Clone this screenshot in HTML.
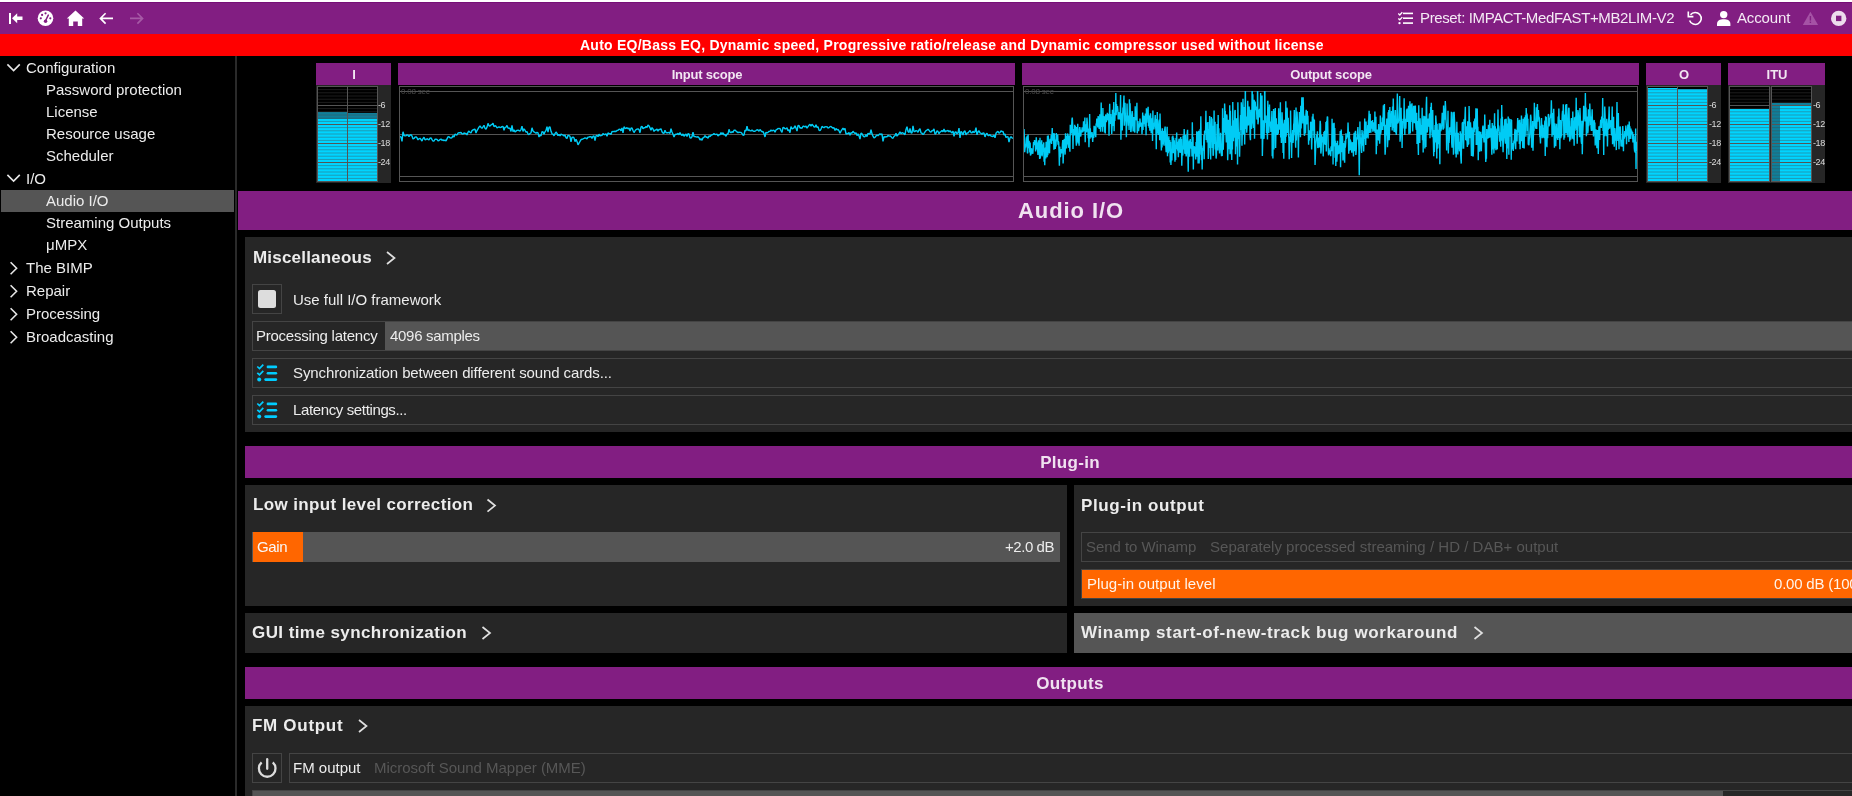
<!DOCTYPE html>
<html><head><meta charset="utf-8">
<style>
*{box-sizing:border-box;margin:0;padding:0}
html,body{width:1852px;height:796px;overflow:hidden;background:#000;font-family:"Liberation Sans",sans-serif;color:#eee;position:relative}
.a{position:absolute}
.t{position:absolute;white-space:nowrap;line-height:1;will-change:transform}
svg{position:absolute;overflow:visible}
</style></head><body>

<div class="a" style="left:0px;top:0px;width:1852px;height:2px;background:#fff;"></div>
<div class="a" style="left:0px;top:2px;width:1852px;height:32px;background:#821e82;"></div>
<div class="a" style="left:0px;top:2px;width:1852px;height:1px;background:#770e77;"></div>
<svg style="left:0;top:0" width="160" height="34" viewBox="0 0 160 34">
<rect x="9" y="13" width="2" height="11" fill="#ffffff"/>
<path d="M12 18.3 L17.2 13.3 L17.2 16.6 L22.5 16.6 L22.5 20 L17.2 20 L17.2 23.2 Z" fill="#ffffff"/>
<circle cx="45.5" cy="18.3" r="7.8" fill="#ffffff"/>
<circle cx="40.8" cy="18.3" r="1.1" fill="#821e82"/><circle cx="42.1" cy="14.9" r="1.1" fill="#821e82"/><circle cx="45.55" cy="13.3" r="1.1" fill="#821e82"/><circle cx="50.3" cy="18.3" r="1.1" fill="#821e82"/>
<circle cx="45.55" cy="21.2" r="1.75" fill="#821e82"/>
<path d="M45.4 21 L48.3 15.1" stroke="#821e82" stroke-width="1.5" stroke-linecap="round"/>
<path d="M75.5 10.5 L84.2 18.6 L82.2 18.6 L82.2 26 L77.8 26 L77.8 21.5 L73.2 21.5 L73.2 26 L68.8 26 L68.8 18.6 L66.8 18.6 Z" fill="#ffffff"/>
<path d="M113 18.4 L100.5 18.4 M105.6 13.2 L100.4 18.4 L105.6 23.6" stroke="#ffffff" stroke-width="1.6" fill="none"/>
<path d="M130 18.4 L142.5 18.4 M137.4 13.2 L142.6 18.4 L137.4 23.6" stroke="#a65aa6" stroke-width="1.6" fill="none"/>
</svg>
<svg style="left:1390px;top:0" width="462" height="34" viewBox="1390 0 462 34">
<path d="M1398.3 13.6 L1399.8 15 L1402.3 12.3 M1398.3 18.4 L1399.8 19.8 L1402.3 17.1" stroke="#ffffff" stroke-width="1.3" fill="none"/>
<circle cx="1399.5" cy="23.1" r="1.2" fill="#ffffff"/>
<rect x="1403" y="12.6" width="10" height="1.6" fill="#ffffff"/>
<rect x="1403" y="17.4" width="10" height="1.6" fill="#ffffff"/>
<rect x="1403" y="22.3" width="10" height="1.6" fill="#ffffff"/>
<path d="M1690.5 14.8 A6 6 0 1 1 1689.6 20.5" stroke="#ffffff" stroke-width="1.6" fill="none"/>
<path d="M1688.3 11.5 L1688.3 16.6 L1693.4 16.6" stroke="#ffffff" stroke-width="1.6" fill="none"/>
<circle cx="1723.7" cy="14.6" r="3.7" fill="#ffffff"/>
<path d="M1717 26 L1717 24.2 C1717 20.4 1720 19.3 1723.7 19.3 C1727.4 19.3 1730.4 20.4 1730.4 24.2 L1730.4 26 Z" fill="#ffffff"/>
<path d="M1810.4 11.8 L1818.1 25 L1802.8 25 Z" fill="#a552a5"/>
<rect x="1809.7" y="16" width="1.4" height="4.6" fill="#821e82"/><rect x="1809.7" y="21.6" width="1.4" height="1.4" fill="#821e82"/>
<circle cx="1838.7" cy="18.4" r="7.7" fill="#ecdcec"/>
<rect x="1836" y="15.7" width="5.4" height="5.4" fill="#821e82"/>
</svg>
<div class="t" style="left:1420px;top:10.30px;font-size:15px;font-weight:400;color:#f4eaf4;letter-spacing:-0.37px;">Preset: IMPACT-MedFAST+MB2LIM-V2</div>
<div class="t" style="left:1736.5px;top:10.30px;font-size:15px;font-weight:400;color:#f4eaf4;letter-spacing:-0.15px;">Account</div>
<div class="a" style="left:0px;top:34px;width:1852px;height:22px;background:#ff0000;"></div>
<div class="t" style="left:580px;top:38.15px;font-size:14px;font-weight:700;color:#ffffff;letter-spacing:0.245px;">Auto EQ/Bass EQ, Dynamic speed, Progressive ratio/release and Dynamic compressor used without license</div>
<div class="a" style="left:235px;top:56px;width:2px;height:740px;background:#2a2a2a;"></div>
<div class="a" style="left:1px;top:190px;width:233px;height:22px;background:#555555;"></div>
<div class="t" style="left:26.4px;top:60.30px;font-size:15px;font-weight:400;color:#ececec;letter-spacing:0px;">Configuration</div>
<div class="t" style="left:45.7px;top:82.30px;font-size:15px;font-weight:400;color:#ececec;letter-spacing:0px;">Password protection</div>
<div class="t" style="left:45.7px;top:104.30px;font-size:15px;font-weight:400;color:#ececec;letter-spacing:0px;">License</div>
<div class="t" style="left:45.7px;top:126.30px;font-size:15px;font-weight:400;color:#ececec;letter-spacing:0px;">Resource usage</div>
<div class="t" style="left:45.7px;top:148.30px;font-size:15px;font-weight:400;color:#ececec;letter-spacing:0px;">Scheduler</div>
<div class="t" style="left:26.4px;top:170.80px;font-size:15px;font-weight:400;color:#ececec;letter-spacing:0px;">I/O</div>
<div class="t" style="left:45.7px;top:192.80px;font-size:15px;font-weight:400;color:#ececec;letter-spacing:0px;">Audio I/O</div>
<div class="t" style="left:45.7px;top:214.80px;font-size:15px;font-weight:400;color:#ececec;letter-spacing:0px;">Streaming Outputs</div>
<div class="t" style="left:45.7px;top:236.80px;font-size:15px;font-weight:400;color:#ececec;letter-spacing:0px;">&mu;MPX</div>
<div class="t" style="left:26.4px;top:260.30px;font-size:15px;font-weight:400;color:#ececec;letter-spacing:0px;">The BIMP</div>
<div class="t" style="left:26.4px;top:283.30px;font-size:15px;font-weight:400;color:#ececec;letter-spacing:0px;">Repair</div>
<div class="t" style="left:26.4px;top:306.30px;font-size:15px;font-weight:400;color:#ececec;letter-spacing:0px;">Processing</div>
<div class="t" style="left:26.4px;top:329.30px;font-size:15px;font-weight:400;color:#ececec;letter-spacing:0px;">Broadcasting</div>
<svg style="left:0;top:0" width="30" height="360"><path d="M7.4 64.4 L13.6 70.6 L19.8 64.4" stroke="#e6e6e6" stroke-width="1.6" fill="none"/><path d="M7.4 174.9 L13.6 181.1 L19.8 174.9" stroke="#e6e6e6" stroke-width="1.6" fill="none"/><path d="M10.6 262.2 L16.6 268.2 L10.6 274.2" stroke="#e6e6e6" stroke-width="1.6" fill="none"/><path d="M10.6 285.2 L16.6 291.2 L10.6 297.2" stroke="#e6e6e6" stroke-width="1.6" fill="none"/><path d="M10.6 308.2 L16.6 314.2 L10.6 320.2" stroke="#e6e6e6" stroke-width="1.6" fill="none"/><path d="M10.6 331.2 L16.6 337.2 L10.6 343.2" stroke="#e6e6e6" stroke-width="1.6" fill="none"/></svg>
<div class="a" style="left:316px;top:63px;width:75px;height:22px;background:#821e82"></div>
<div class="t" style="left:-146.5px;width:1000px;text-align:center;top:68.00px;font-size:13px;font-weight:700;color:#f2e6f2;letter-spacing:0px">I</div>
<div class="a" style="left:316px;top:85px;width:75px;height:98px;background:#262626;"></div>
<div class="a" style="left:317px;top:86px;width:31px;height:96px;border:1px solid #555;background:#000"></div>
<div class="a" style="left:318px;top:112.2px;width:29px;height:6.5px;background:#0f7f9a;"></div>
<div class="a" style="left:318px;top:118.7px;width:29px;height:62.3px;background:#00d4ff;"></div>
<svg style="left:0;top:0" width="1" height="1"><rect x="318" y="89.27" width="29" height="0.8" fill="rgba(70,70,70,0.5)"/><rect x="318" y="92.43" width="29" height="0.8" fill="rgba(70,70,70,0.5)"/><rect x="318" y="95.60" width="29" height="0.8" fill="rgba(70,70,70,0.5)"/><rect x="318" y="98.77" width="29" height="0.8" fill="rgba(70,70,70,0.5)"/><rect x="318" y="101.93" width="29" height="0.8" fill="rgba(70,70,70,0.5)"/><rect x="318" y="108.27" width="29" height="0.8" fill="rgba(70,70,70,0.5)"/><rect x="318" y="111.43" width="29" height="0.8" fill="rgba(70,70,70,0.5)"/><rect x="318" y="114.60" width="29" height="0.8" fill="rgba(70,70,70,0.5)"/><rect x="318" y="117.77" width="29" height="0.8" fill="rgba(70,70,70,0.5)"/><rect x="318" y="120.93" width="29" height="0.8" fill="rgba(70,70,70,0.5)"/><rect x="318" y="127.27" width="29" height="0.8" fill="rgba(70,70,70,0.5)"/><rect x="318" y="130.43" width="29" height="0.8" fill="rgba(70,70,70,0.5)"/><rect x="318" y="133.60" width="29" height="0.8" fill="rgba(70,70,70,0.5)"/><rect x="318" y="136.77" width="29" height="0.8" fill="rgba(70,70,70,0.5)"/><rect x="318" y="139.93" width="29" height="0.8" fill="rgba(70,70,70,0.5)"/><rect x="318" y="146.27" width="29" height="0.8" fill="rgba(70,70,70,0.5)"/><rect x="318" y="149.43" width="29" height="0.8" fill="rgba(70,70,70,0.5)"/><rect x="318" y="152.60" width="29" height="0.8" fill="rgba(70,70,70,0.5)"/><rect x="318" y="155.77" width="29" height="0.8" fill="rgba(70,70,70,0.5)"/><rect x="318" y="158.93" width="29" height="0.8" fill="rgba(70,70,70,0.5)"/><rect x="318" y="165.27" width="29" height="0.8" fill="rgba(70,70,70,0.5)"/><rect x="318" y="168.43" width="29" height="0.8" fill="rgba(70,70,70,0.5)"/><rect x="318" y="171.60" width="29" height="0.8" fill="rgba(70,70,70,0.5)"/><rect x="318" y="174.77" width="29" height="0.8" fill="rgba(70,70,70,0.5)"/><rect x="318" y="177.93" width="29" height="0.8" fill="rgba(70,70,70,0.5)"/></svg>
<div class="a" style="left:318px;top:105px;width:29px;height:1px;background:#555;"></div>
<div class="a" style="left:318px;top:124px;width:29px;height:1px;background:#555;"></div>
<div class="a" style="left:318px;top:143px;width:29px;height:1px;background:#555;"></div>
<div class="a" style="left:318px;top:162px;width:29px;height:1px;background:#555;"></div>
<div class="a" style="left:347px;top:86px;width:31px;height:96px;border:1px solid #555;background:#000"></div>
<div class="a" style="left:348px;top:112.5px;width:29px;height:6.200000000000003px;background:#0f7f9a;"></div>
<div class="a" style="left:348px;top:118.7px;width:29px;height:62.3px;background:#00d4ff;"></div>
<svg style="left:0;top:0" width="1" height="1"><rect x="348" y="89.27" width="29" height="0.8" fill="rgba(70,70,70,0.5)"/><rect x="348" y="92.43" width="29" height="0.8" fill="rgba(70,70,70,0.5)"/><rect x="348" y="95.60" width="29" height="0.8" fill="rgba(70,70,70,0.5)"/><rect x="348" y="98.77" width="29" height="0.8" fill="rgba(70,70,70,0.5)"/><rect x="348" y="101.93" width="29" height="0.8" fill="rgba(70,70,70,0.5)"/><rect x="348" y="108.27" width="29" height="0.8" fill="rgba(70,70,70,0.5)"/><rect x="348" y="111.43" width="29" height="0.8" fill="rgba(70,70,70,0.5)"/><rect x="348" y="114.60" width="29" height="0.8" fill="rgba(70,70,70,0.5)"/><rect x="348" y="117.77" width="29" height="0.8" fill="rgba(70,70,70,0.5)"/><rect x="348" y="120.93" width="29" height="0.8" fill="rgba(70,70,70,0.5)"/><rect x="348" y="127.27" width="29" height="0.8" fill="rgba(70,70,70,0.5)"/><rect x="348" y="130.43" width="29" height="0.8" fill="rgba(70,70,70,0.5)"/><rect x="348" y="133.60" width="29" height="0.8" fill="rgba(70,70,70,0.5)"/><rect x="348" y="136.77" width="29" height="0.8" fill="rgba(70,70,70,0.5)"/><rect x="348" y="139.93" width="29" height="0.8" fill="rgba(70,70,70,0.5)"/><rect x="348" y="146.27" width="29" height="0.8" fill="rgba(70,70,70,0.5)"/><rect x="348" y="149.43" width="29" height="0.8" fill="rgba(70,70,70,0.5)"/><rect x="348" y="152.60" width="29" height="0.8" fill="rgba(70,70,70,0.5)"/><rect x="348" y="155.77" width="29" height="0.8" fill="rgba(70,70,70,0.5)"/><rect x="348" y="158.93" width="29" height="0.8" fill="rgba(70,70,70,0.5)"/><rect x="348" y="165.27" width="29" height="0.8" fill="rgba(70,70,70,0.5)"/><rect x="348" y="168.43" width="29" height="0.8" fill="rgba(70,70,70,0.5)"/><rect x="348" y="171.60" width="29" height="0.8" fill="rgba(70,70,70,0.5)"/><rect x="348" y="174.77" width="29" height="0.8" fill="rgba(70,70,70,0.5)"/><rect x="348" y="177.93" width="29" height="0.8" fill="rgba(70,70,70,0.5)"/></svg>
<div class="a" style="left:348px;top:105px;width:29px;height:1px;background:#555;"></div>
<div class="a" style="left:348px;top:124px;width:29px;height:1px;background:#555;"></div>
<div class="a" style="left:348px;top:143px;width:29px;height:1px;background:#555;"></div>
<div class="a" style="left:348px;top:162px;width:29px;height:1px;background:#555;"></div>
<div class="t" style="left:378px;top:101.48px;font-size:9px;font-weight:400;color:#dddddd;letter-spacing:-0.4px;">-6</div>
<div class="t" style="left:378px;top:120.48px;font-size:9px;font-weight:400;color:#dddddd;letter-spacing:-0.4px;">-12</div>
<div class="t" style="left:378px;top:139.48px;font-size:9px;font-weight:400;color:#dddddd;letter-spacing:-0.4px;">-18</div>
<div class="t" style="left:378px;top:158.48px;font-size:9px;font-weight:400;color:#dddddd;letter-spacing:-0.4px;">-24</div>
<div class="a" style="left:1646px;top:63px;width:75px;height:22px;background:#821e82"></div>
<div class="t" style="left:1183.5px;width:1000px;text-align:center;top:68.00px;font-size:13px;font-weight:700;color:#f2e6f2;letter-spacing:0px">O</div>
<div class="a" style="left:1646px;top:85px;width:75px;height:98px;background:#262626;"></div>
<div class="a" style="left:1647px;top:86px;width:31px;height:96px;border:1px solid #555;background:#000"></div>
<div class="a" style="left:1648px;top:87.6px;width:29px;height:93.4px;background:#00d4ff;"></div>
<svg style="left:0;top:0" width="1" height="1"><rect x="1648" y="89.27" width="29" height="0.8" fill="rgba(70,70,70,0.5)"/><rect x="1648" y="92.43" width="29" height="0.8" fill="rgba(70,70,70,0.5)"/><rect x="1648" y="95.60" width="29" height="0.8" fill="rgba(70,70,70,0.5)"/><rect x="1648" y="98.77" width="29" height="0.8" fill="rgba(70,70,70,0.5)"/><rect x="1648" y="101.93" width="29" height="0.8" fill="rgba(70,70,70,0.5)"/><rect x="1648" y="108.27" width="29" height="0.8" fill="rgba(70,70,70,0.5)"/><rect x="1648" y="111.43" width="29" height="0.8" fill="rgba(70,70,70,0.5)"/><rect x="1648" y="114.60" width="29" height="0.8" fill="rgba(70,70,70,0.5)"/><rect x="1648" y="117.77" width="29" height="0.8" fill="rgba(70,70,70,0.5)"/><rect x="1648" y="120.93" width="29" height="0.8" fill="rgba(70,70,70,0.5)"/><rect x="1648" y="127.27" width="29" height="0.8" fill="rgba(70,70,70,0.5)"/><rect x="1648" y="130.43" width="29" height="0.8" fill="rgba(70,70,70,0.5)"/><rect x="1648" y="133.60" width="29" height="0.8" fill="rgba(70,70,70,0.5)"/><rect x="1648" y="136.77" width="29" height="0.8" fill="rgba(70,70,70,0.5)"/><rect x="1648" y="139.93" width="29" height="0.8" fill="rgba(70,70,70,0.5)"/><rect x="1648" y="146.27" width="29" height="0.8" fill="rgba(70,70,70,0.5)"/><rect x="1648" y="149.43" width="29" height="0.8" fill="rgba(70,70,70,0.5)"/><rect x="1648" y="152.60" width="29" height="0.8" fill="rgba(70,70,70,0.5)"/><rect x="1648" y="155.77" width="29" height="0.8" fill="rgba(70,70,70,0.5)"/><rect x="1648" y="158.93" width="29" height="0.8" fill="rgba(70,70,70,0.5)"/><rect x="1648" y="165.27" width="29" height="0.8" fill="rgba(70,70,70,0.5)"/><rect x="1648" y="168.43" width="29" height="0.8" fill="rgba(70,70,70,0.5)"/><rect x="1648" y="171.60" width="29" height="0.8" fill="rgba(70,70,70,0.5)"/><rect x="1648" y="174.77" width="29" height="0.8" fill="rgba(70,70,70,0.5)"/><rect x="1648" y="177.93" width="29" height="0.8" fill="rgba(70,70,70,0.5)"/></svg>
<div class="a" style="left:1648px;top:105px;width:29px;height:1px;background:#555;"></div>
<div class="a" style="left:1648px;top:124px;width:29px;height:1px;background:#555;"></div>
<div class="a" style="left:1648px;top:143px;width:29px;height:1px;background:#555;"></div>
<div class="a" style="left:1648px;top:162px;width:29px;height:1px;background:#555;"></div>
<div class="a" style="left:1677px;top:86px;width:31px;height:96px;border:1px solid #555;background:#000"></div>
<div class="a" style="left:1678px;top:88.8px;width:29px;height:92.2px;background:#00d4ff;"></div>
<svg style="left:0;top:0" width="1" height="1"><rect x="1678" y="89.27" width="29" height="0.8" fill="rgba(70,70,70,0.5)"/><rect x="1678" y="92.43" width="29" height="0.8" fill="rgba(70,70,70,0.5)"/><rect x="1678" y="95.60" width="29" height="0.8" fill="rgba(70,70,70,0.5)"/><rect x="1678" y="98.77" width="29" height="0.8" fill="rgba(70,70,70,0.5)"/><rect x="1678" y="101.93" width="29" height="0.8" fill="rgba(70,70,70,0.5)"/><rect x="1678" y="108.27" width="29" height="0.8" fill="rgba(70,70,70,0.5)"/><rect x="1678" y="111.43" width="29" height="0.8" fill="rgba(70,70,70,0.5)"/><rect x="1678" y="114.60" width="29" height="0.8" fill="rgba(70,70,70,0.5)"/><rect x="1678" y="117.77" width="29" height="0.8" fill="rgba(70,70,70,0.5)"/><rect x="1678" y="120.93" width="29" height="0.8" fill="rgba(70,70,70,0.5)"/><rect x="1678" y="127.27" width="29" height="0.8" fill="rgba(70,70,70,0.5)"/><rect x="1678" y="130.43" width="29" height="0.8" fill="rgba(70,70,70,0.5)"/><rect x="1678" y="133.60" width="29" height="0.8" fill="rgba(70,70,70,0.5)"/><rect x="1678" y="136.77" width="29" height="0.8" fill="rgba(70,70,70,0.5)"/><rect x="1678" y="139.93" width="29" height="0.8" fill="rgba(70,70,70,0.5)"/><rect x="1678" y="146.27" width="29" height="0.8" fill="rgba(70,70,70,0.5)"/><rect x="1678" y="149.43" width="29" height="0.8" fill="rgba(70,70,70,0.5)"/><rect x="1678" y="152.60" width="29" height="0.8" fill="rgba(70,70,70,0.5)"/><rect x="1678" y="155.77" width="29" height="0.8" fill="rgba(70,70,70,0.5)"/><rect x="1678" y="158.93" width="29" height="0.8" fill="rgba(70,70,70,0.5)"/><rect x="1678" y="165.27" width="29" height="0.8" fill="rgba(70,70,70,0.5)"/><rect x="1678" y="168.43" width="29" height="0.8" fill="rgba(70,70,70,0.5)"/><rect x="1678" y="171.60" width="29" height="0.8" fill="rgba(70,70,70,0.5)"/><rect x="1678" y="174.77" width="29" height="0.8" fill="rgba(70,70,70,0.5)"/><rect x="1678" y="177.93" width="29" height="0.8" fill="rgba(70,70,70,0.5)"/></svg>
<div class="a" style="left:1678px;top:105px;width:29px;height:1px;background:#555;"></div>
<div class="a" style="left:1678px;top:124px;width:29px;height:1px;background:#555;"></div>
<div class="a" style="left:1678px;top:143px;width:29px;height:1px;background:#555;"></div>
<div class="a" style="left:1678px;top:162px;width:29px;height:1px;background:#555;"></div>
<div class="t" style="left:1708.5px;top:101.48px;font-size:9px;font-weight:400;color:#dddddd;letter-spacing:-0.4px;">-6</div>
<div class="t" style="left:1708.5px;top:120.48px;font-size:9px;font-weight:400;color:#dddddd;letter-spacing:-0.4px;">-12</div>
<div class="t" style="left:1708.5px;top:139.48px;font-size:9px;font-weight:400;color:#dddddd;letter-spacing:-0.4px;">-18</div>
<div class="t" style="left:1708.5px;top:158.48px;font-size:9px;font-weight:400;color:#dddddd;letter-spacing:-0.4px;">-24</div>
<div class="a" style="left:1728px;top:63px;width:97px;height:22px;background:#821e82"></div>
<div class="t" style="left:1276.5px;width:1000px;text-align:center;top:68.00px;font-size:13px;font-weight:700;color:#f2e6f2;letter-spacing:0px">ITU</div>
<div class="a" style="left:1728px;top:85px;width:97px;height:98px;background:#262626;"></div>
<div class="a" style="left:1729px;top:86px;width:41px;height:96px;border:1px solid #555;background:#000"></div>
<div class="a" style="left:1730px;top:108.7px;width:39px;height:72.3px;background:#00d4ff;"></div>
<svg style="left:0;top:0" width="1" height="1"><rect x="1730" y="89.27" width="39" height="0.8" fill="rgba(70,70,70,0.5)"/><rect x="1730" y="92.43" width="39" height="0.8" fill="rgba(70,70,70,0.5)"/><rect x="1730" y="95.60" width="39" height="0.8" fill="rgba(70,70,70,0.5)"/><rect x="1730" y="98.77" width="39" height="0.8" fill="rgba(70,70,70,0.5)"/><rect x="1730" y="101.93" width="39" height="0.8" fill="rgba(70,70,70,0.5)"/><rect x="1730" y="108.27" width="39" height="0.8" fill="rgba(70,70,70,0.5)"/><rect x="1730" y="111.43" width="39" height="0.8" fill="rgba(70,70,70,0.5)"/><rect x="1730" y="114.60" width="39" height="0.8" fill="rgba(70,70,70,0.5)"/><rect x="1730" y="117.77" width="39" height="0.8" fill="rgba(70,70,70,0.5)"/><rect x="1730" y="120.93" width="39" height="0.8" fill="rgba(70,70,70,0.5)"/><rect x="1730" y="127.27" width="39" height="0.8" fill="rgba(70,70,70,0.5)"/><rect x="1730" y="130.43" width="39" height="0.8" fill="rgba(70,70,70,0.5)"/><rect x="1730" y="133.60" width="39" height="0.8" fill="rgba(70,70,70,0.5)"/><rect x="1730" y="136.77" width="39" height="0.8" fill="rgba(70,70,70,0.5)"/><rect x="1730" y="139.93" width="39" height="0.8" fill="rgba(70,70,70,0.5)"/><rect x="1730" y="146.27" width="39" height="0.8" fill="rgba(70,70,70,0.5)"/><rect x="1730" y="149.43" width="39" height="0.8" fill="rgba(70,70,70,0.5)"/><rect x="1730" y="152.60" width="39" height="0.8" fill="rgba(70,70,70,0.5)"/><rect x="1730" y="155.77" width="39" height="0.8" fill="rgba(70,70,70,0.5)"/><rect x="1730" y="158.93" width="39" height="0.8" fill="rgba(70,70,70,0.5)"/><rect x="1730" y="165.27" width="39" height="0.8" fill="rgba(70,70,70,0.5)"/><rect x="1730" y="168.43" width="39" height="0.8" fill="rgba(70,70,70,0.5)"/><rect x="1730" y="171.60" width="39" height="0.8" fill="rgba(70,70,70,0.5)"/><rect x="1730" y="174.77" width="39" height="0.8" fill="rgba(70,70,70,0.5)"/><rect x="1730" y="177.93" width="39" height="0.8" fill="rgba(70,70,70,0.5)"/></svg>
<div class="a" style="left:1730px;top:105px;width:39px;height:1px;background:#555;"></div>
<div class="a" style="left:1730px;top:124px;width:39px;height:1px;background:#555;"></div>
<div class="a" style="left:1730px;top:143px;width:39px;height:1px;background:#555;"></div>
<div class="a" style="left:1730px;top:162px;width:39px;height:1px;background:#555;"></div>
<div class="a" style="left:1771px;top:86px;width:41px;height:96px;border:1px solid #555;background:#000"></div>
<div class="a" style="left:1772px;top:103px;width:39px;height:2.700000000000003px;background:#0f7f9a;"></div>
<div class="a" style="left:1772px;top:105.7px;width:39px;height:75.3px;background:#00d4ff;"></div>
<div class="a" style="left:1772px;top:105.7px;width:8px;height:75.3px;background:#0f7f9a;"></div>
<svg style="left:0;top:0" width="1" height="1"><rect x="1772" y="89.27" width="39" height="0.8" fill="rgba(70,70,70,0.5)"/><rect x="1772" y="92.43" width="39" height="0.8" fill="rgba(70,70,70,0.5)"/><rect x="1772" y="95.60" width="39" height="0.8" fill="rgba(70,70,70,0.5)"/><rect x="1772" y="98.77" width="39" height="0.8" fill="rgba(70,70,70,0.5)"/><rect x="1772" y="101.93" width="39" height="0.8" fill="rgba(70,70,70,0.5)"/><rect x="1772" y="108.27" width="39" height="0.8" fill="rgba(70,70,70,0.5)"/><rect x="1772" y="111.43" width="39" height="0.8" fill="rgba(70,70,70,0.5)"/><rect x="1772" y="114.60" width="39" height="0.8" fill="rgba(70,70,70,0.5)"/><rect x="1772" y="117.77" width="39" height="0.8" fill="rgba(70,70,70,0.5)"/><rect x="1772" y="120.93" width="39" height="0.8" fill="rgba(70,70,70,0.5)"/><rect x="1772" y="127.27" width="39" height="0.8" fill="rgba(70,70,70,0.5)"/><rect x="1772" y="130.43" width="39" height="0.8" fill="rgba(70,70,70,0.5)"/><rect x="1772" y="133.60" width="39" height="0.8" fill="rgba(70,70,70,0.5)"/><rect x="1772" y="136.77" width="39" height="0.8" fill="rgba(70,70,70,0.5)"/><rect x="1772" y="139.93" width="39" height="0.8" fill="rgba(70,70,70,0.5)"/><rect x="1772" y="146.27" width="39" height="0.8" fill="rgba(70,70,70,0.5)"/><rect x="1772" y="149.43" width="39" height="0.8" fill="rgba(70,70,70,0.5)"/><rect x="1772" y="152.60" width="39" height="0.8" fill="rgba(70,70,70,0.5)"/><rect x="1772" y="155.77" width="39" height="0.8" fill="rgba(70,70,70,0.5)"/><rect x="1772" y="158.93" width="39" height="0.8" fill="rgba(70,70,70,0.5)"/><rect x="1772" y="165.27" width="39" height="0.8" fill="rgba(70,70,70,0.5)"/><rect x="1772" y="168.43" width="39" height="0.8" fill="rgba(70,70,70,0.5)"/><rect x="1772" y="171.60" width="39" height="0.8" fill="rgba(70,70,70,0.5)"/><rect x="1772" y="174.77" width="39" height="0.8" fill="rgba(70,70,70,0.5)"/><rect x="1772" y="177.93" width="39" height="0.8" fill="rgba(70,70,70,0.5)"/></svg>
<div class="a" style="left:1772px;top:105px;width:39px;height:1px;background:#555;"></div>
<div class="a" style="left:1772px;top:124px;width:39px;height:1px;background:#555;"></div>
<div class="a" style="left:1772px;top:143px;width:39px;height:1px;background:#555;"></div>
<div class="a" style="left:1772px;top:162px;width:39px;height:1px;background:#555;"></div>
<div class="t" style="left:1812.5px;top:101.48px;font-size:9px;font-weight:400;color:#dddddd;letter-spacing:-0.4px;">-6</div>
<div class="t" style="left:1812.5px;top:120.48px;font-size:9px;font-weight:400;color:#dddddd;letter-spacing:-0.4px;">-12</div>
<div class="t" style="left:1812.5px;top:139.48px;font-size:9px;font-weight:400;color:#dddddd;letter-spacing:-0.4px;">-18</div>
<div class="t" style="left:1812.5px;top:158.48px;font-size:9px;font-weight:400;color:#dddddd;letter-spacing:-0.4px;">-24</div>
<div class="a" style="left:398px;top:63px;width:617px;height:22px;background:#821e82"></div>
<div class="t" style="left:206.5px;width:1000px;text-align:center;top:68.00px;font-size:13px;font-weight:700;color:#f2e6f2;letter-spacing:-0.2px">Input scope</div>
<div class="a" style="left:399px;top:86px;width:615px;height:96px;border:1px solid #555;background:#000"></div>
<div class="a" style="left:400px;top:91px;width:613px;height:1px;background:#555;"></div>
<div class="a" style="left:400px;top:134px;width:613px;height:1px;background:#555;"></div>
<div class="a" style="left:400px;top:176px;width:613px;height:1px;background:#555;"></div>
<div class="t" style="left:401px;top:87.73px;font-size:8px;font-weight:400;color:#4a4a4a;letter-spacing:-0.2px;">0.08 sec</div>
<svg style="left:0;top:0" width="1852" height="190"><defs><clipPath id="c398"><rect x="400" y="91" width="613" height="90"/></clipPath></defs><path clip-path="url(#c398)" d="M400.00 136.27 L401.00 137.20 L402.00 141.37 L403.00 131.81 L404.00 135.31 L405.00 135.92 L406.00 135.70 L407.00 134.91 L408.00 135.22 L409.00 136.59 L410.00 135.12 L411.00 134.63 L412.00 136.05 L413.00 138.90 L414.00 138.45 L415.00 137.17 L416.00 136.87 L417.00 137.84 L418.00 139.87 L419.00 138.85 L420.00 138.24 L421.00 139.51 L422.00 140.99 L423.00 138.60 L424.00 137.28 L425.00 139.73 L426.00 139.54 L427.00 138.72 L428.00 139.32 L429.00 139.95 L430.00 138.08 L431.00 137.85 L432.00 139.67 L433.00 141.08 L434.00 141.01 L435.00 139.26 L436.00 139.17 L437.00 139.41 L438.00 140.76 L439.00 140.51 L440.00 139.64 L441.00 139.00 L442.00 140.27 L443.00 139.85 L444.00 140.70 L445.00 139.98 L446.00 140.93 L447.00 138.92 L448.00 136.93 L449.00 136.71 L450.00 137.92 L451.00 138.03 L452.00 137.59 L453.00 135.52 L454.00 137.05 L455.00 134.23 L456.00 134.65 L457.00 135.03 L458.00 133.13 L459.00 132.70 L460.00 132.78 L461.00 132.51 L462.00 133.91 L463.00 134.00 L464.00 133.00 L465.00 133.40 L466.00 133.49 L467.00 134.92 L468.00 132.23 L469.00 131.08 L470.00 132.46 L471.00 133.01 L472.00 130.56 L473.00 129.83 L474.00 129.48 L475.00 129.18 L476.00 133.05 L477.00 130.51 L478.00 128.93 L479.00 127.11 L480.00 125.91 L481.00 127.41 L482.00 128.35 L483.00 126.89 L484.00 125.32 L485.00 128.39 L486.00 129.08 L487.00 127.14 L488.00 123.36 L489.00 125.76 L490.00 126.07 L491.00 124.84 L492.00 124.54 L493.00 123.21 L494.00 126.66 L495.00 125.75 L496.00 126.25 L497.00 127.97 L498.00 127.28 L499.00 126.77 L500.00 127.53 L501.00 127.41 L502.00 126.65 L503.00 126.39 L504.00 130.29 L505.00 127.35 L506.00 127.06 L507.00 125.41 L508.00 128.01 L509.00 128.25 L510.00 128.19 L511.00 131.47 L512.00 125.32 L513.00 131.67 L514.00 129.92 L515.00 132.01 L516.00 131.14 L517.00 130.38 L518.00 130.29 L519.00 130.52 L520.00 131.25 L521.00 129.47 L522.00 126.09 L523.00 131.41 L524.00 128.82 L525.00 130.19 L526.00 132.29 L527.00 131.44 L528.00 134.06 L529.00 134.57 L530.00 133.51 L531.00 132.96 L532.00 127.79 L533.00 131.07 L534.00 131.91 L535.00 132.53 L536.00 133.24 L537.00 132.37 L538.00 132.89 L539.00 136.96 L540.00 135.09 L541.00 135.83 L542.00 131.69 L543.00 131.87 L544.00 134.16 L545.00 131.84 L546.00 130.40 L547.00 126.69 L548.00 132.16 L549.00 127.11 L550.00 126.95 L551.00 131.32 L552.00 133.76 L553.00 134.24 L554.00 135.76 L555.00 133.66 L556.00 132.02 L557.00 133.40 L558.00 135.59 L559.00 134.34 L560.00 135.99 L561.00 134.11 L562.00 134.61 L563.00 135.04 L564.00 135.87 L565.00 134.94 L566.00 137.67 L567.00 138.56 L568.00 135.31 L569.00 135.72 L570.00 136.31 L571.00 141.79 L572.00 137.33 L573.00 137.17 L574.00 137.81 L575.00 141.65 L576.00 139.33 L577.00 141.43 L578.00 144.93 L579.00 143.11 L580.00 141.45 L581.00 139.68 L582.00 139.26 L583.00 138.88 L584.00 138.44 L585.00 137.94 L586.00 138.11 L587.00 138.95 L588.00 137.14 L589.00 137.04 L590.00 136.80 L591.00 136.62 L592.00 138.38 L593.00 136.41 L594.00 135.86 L595.00 140.55 L596.00 135.91 L597.00 135.38 L598.00 136.65 L599.00 134.19 L600.00 135.80 L601.00 135.65 L602.00 135.39 L603.00 133.51 L604.00 134.51 L605.00 134.55 L606.00 133.66 L607.00 136.36 L608.00 132.90 L609.00 133.58 L610.00 133.59 L611.00 134.51 L612.00 131.59 L613.00 131.46 L614.00 131.68 L615.00 131.26 L616.00 131.44 L617.00 130.49 L618.00 130.21 L619.00 129.36 L620.00 129.22 L621.00 130.79 L622.00 127.94 L623.00 132.76 L624.00 126.76 L625.00 128.15 L626.00 128.63 L627.00 127.59 L628.00 128.91 L629.00 127.86 L630.00 131.02 L631.00 128.27 L632.00 127.94 L633.00 130.53 L634.00 132.56 L635.00 130.89 L636.00 129.64 L637.00 129.13 L638.00 128.81 L639.00 129.61 L640.00 132.69 L641.00 127.07 L642.00 126.14 L643.00 128.88 L644.00 127.63 L645.00 127.90 L646.00 126.48 L647.00 127.54 L648.00 124.90 L649.00 125.90 L650.00 127.82 L651.00 130.25 L652.00 127.59 L653.00 128.95 L654.00 131.47 L655.00 130.04 L656.00 130.03 L657.00 129.05 L658.00 131.14 L659.00 129.35 L660.00 129.43 L661.00 128.75 L662.00 131.73 L663.00 133.09 L664.00 133.28 L665.00 130.25 L666.00 132.51 L667.00 132.78 L668.00 132.69 L669.00 132.46 L670.00 133.45 L671.00 128.70 L672.00 132.04 L673.00 134.38 L674.00 137.08 L675.00 134.65 L676.00 134.28 L677.00 134.20 L678.00 133.41 L679.00 134.80 L680.00 132.63 L681.00 134.51 L682.00 135.53 L683.00 133.97 L684.00 136.23 L685.00 134.99 L686.00 134.14 L687.00 136.58 L688.00 133.76 L689.00 133.92 L690.00 137.85 L691.00 137.95 L692.00 136.75 L693.00 132.07 L694.00 136.49 L695.00 136.64 L696.00 136.79 L697.00 137.15 L698.00 136.71 L699.00 137.65 L700.00 140.06 L701.00 138.52 L702.00 140.30 L703.00 137.84 L704.00 137.36 L705.00 135.67 L706.00 137.24 L707.00 137.00 L708.00 138.18 L709.00 135.67 L710.00 136.68 L711.00 135.27 L712.00 134.77 L713.00 134.31 L714.00 133.66 L715.00 134.43 L716.00 134.34 L717.00 134.06 L718.00 135.97 L719.00 134.69 L720.00 134.75 L721.00 132.66 L722.00 134.31 L723.00 132.74 L724.00 134.94 L725.00 134.49 L726.00 136.35 L727.00 133.94 L728.00 134.11 L729.00 129.29 L730.00 132.12 L731.00 132.77 L732.00 131.60 L733.00 132.57 L734.00 130.19 L735.00 130.12 L736.00 131.03 L737.00 131.84 L738.00 132.68 L739.00 132.24 L740.00 132.36 L741.00 132.39 L742.00 133.52 L743.00 135.22 L744.00 135.15 L745.00 130.24 L746.00 130.92 L747.00 126.13 L748.00 130.71 L749.00 129.80 L750.00 130.77 L751.00 130.91 L752.00 130.08 L753.00 130.84 L754.00 131.43 L755.00 131.30 L756.00 130.56 L757.00 129.78 L758.00 129.94 L759.00 131.20 L760.00 129.56 L761.00 130.71 L762.00 131.78 L763.00 131.52 L764.00 133.66 L765.00 136.93 L766.00 132.22 L767.00 133.05 L768.00 132.25 L769.00 131.36 L770.00 131.39 L771.00 130.01 L772.00 130.94 L773.00 130.31 L774.00 130.40 L775.00 132.10 L776.00 129.92 L777.00 129.45 L778.00 128.49 L779.00 128.60 L780.00 128.47 L781.00 130.61 L782.00 132.35 L783.00 127.31 L784.00 127.70 L785.00 128.76 L786.00 128.68 L787.00 127.79 L788.00 130.81 L789.00 129.69 L790.00 132.73 L791.00 126.50 L792.00 128.84 L793.00 128.53 L794.00 127.88 L795.00 125.74 L796.00 128.11 L797.00 131.08 L798.00 125.74 L799.00 125.44 L800.00 127.96 L801.00 127.80 L802.00 128.26 L803.00 126.24 L804.00 126.32 L805.00 126.86 L806.00 126.08 L807.00 128.24 L808.00 126.66 L809.00 125.24 L810.00 124.30 L811.00 126.30 L812.00 124.30 L813.00 125.42 L814.00 126.85 L815.00 127.11 L816.00 124.67 L817.00 127.57 L818.00 126.64 L819.00 130.08 L820.00 130.75 L821.00 129.03 L822.00 126.42 L823.00 127.06 L824.00 127.67 L825.00 126.70 L826.00 126.88 L827.00 126.77 L828.00 127.98 L829.00 127.70 L830.00 126.63 L831.00 126.56 L832.00 127.35 L833.00 128.10 L834.00 127.64 L835.00 130.53 L836.00 128.44 L837.00 129.81 L838.00 129.47 L839.00 130.82 L840.00 133.30 L841.00 131.24 L842.00 129.65 L843.00 128.05 L844.00 129.87 L845.00 128.30 L846.00 134.21 L847.00 133.23 L848.00 133.95 L849.00 132.40 L850.00 135.35 L851.00 132.78 L852.00 133.11 L853.00 131.27 L854.00 132.59 L855.00 133.48 L856.00 132.74 L857.00 135.64 L858.00 133.90 L859.00 135.82 L860.00 139.17 L861.00 133.16 L862.00 133.72 L863.00 135.72 L864.00 136.91 L865.00 136.57 L866.00 134.54 L867.00 136.65 L868.00 133.27 L869.00 133.77 L870.00 133.81 L871.00 129.78 L872.00 133.91 L873.00 136.14 L874.00 137.94 L875.00 137.38 L876.00 136.02 L877.00 134.96 L878.00 135.83 L879.00 134.61 L880.00 133.79 L881.00 134.59 L882.00 133.83 L883.00 141.32 L884.00 136.77 L885.00 136.97 L886.00 136.77 L887.00 136.91 L888.00 135.42 L889.00 136.11 L890.00 135.92 L891.00 136.62 L892.00 137.87 L893.00 138.26 L894.00 136.30 L895.00 135.70 L896.00 133.35 L897.00 136.21 L898.00 134.79 L899.00 133.65 L900.00 131.78 L901.00 133.73 L902.00 132.69 L903.00 133.02 L904.00 133.68 L905.00 134.69 L906.00 129.39 L907.00 126.70 L908.00 131.51 L909.00 132.47 L910.00 128.34 L911.00 132.92 L912.00 133.02 L913.00 125.90 L914.00 131.56 L915.00 131.46 L916.00 130.64 L917.00 130.86 L918.00 132.27 L919.00 129.87 L920.00 128.75 L921.00 132.89 L922.00 133.23 L923.00 134.64 L924.00 133.45 L925.00 131.94 L926.00 130.68 L927.00 130.12 L928.00 129.15 L929.00 130.30 L930.00 131.65 L931.00 132.18 L932.00 130.51 L933.00 130.81 L934.00 128.78 L935.00 134.10 L936.00 133.26 L937.00 130.82 L938.00 131.44 L939.00 133.68 L940.00 132.20 L941.00 131.52 L942.00 130.49 L943.00 131.88 L944.00 129.06 L945.00 131.91 L946.00 130.82 L947.00 131.03 L948.00 130.33 L949.00 131.88 L950.00 130.85 L951.00 131.92 L952.00 133.03 L953.00 131.01 L954.00 136.46 L955.00 132.27 L956.00 131.88 L957.00 133.85 L958.00 132.84 L959.00 128.07 L960.00 137.94 L961.00 131.38 L962.00 132.57 L963.00 135.01 L964.00 131.54 L965.00 130.92 L966.00 134.86 L967.00 132.96 L968.00 133.16 L969.00 131.69 L970.00 130.52 L971.00 132.52 L972.00 132.91 L973.00 131.24 L974.00 132.55 L975.00 131.72 L976.00 127.72 L977.00 134.83 L978.00 132.05 L979.00 130.76 L980.00 132.91 L981.00 133.29 L982.00 134.33 L983.00 132.87 L984.00 133.25 L985.00 136.87 L986.00 134.35 L987.00 133.33 L988.00 135.54 L989.00 135.49 L990.00 134.61 L991.00 136.16 L992.00 136.27 L993.00 136.63 L994.00 135.29 L995.00 137.84 L996.00 133.24 L997.00 132.04 L998.00 131.23 L999.00 133.21 L1000.00 132.44 L1001.00 130.84 L1002.00 131.58 L1003.00 131.56 L1004.00 134.99 L1005.00 134.00 L1006.00 137.44 L1007.00 136.88 L1008.00 136.82 L1009.00 142.07 L1010.00 137.92 L1011.00 136.57 L1012.00 137.81 L1013.00 138.54" stroke="#00ccf5" stroke-width="1.4" fill="none" stroke-linejoin="bevel"/></svg>
<div class="a" style="left:1022px;top:63px;width:617px;height:22px;background:#821e82"></div>
<div class="t" style="left:830.5px;width:1000px;text-align:center;top:68.00px;font-size:13px;font-weight:700;color:#f2e6f2;letter-spacing:-0.2px">Output scope</div>
<div class="a" style="left:1023px;top:86px;width:615px;height:96px;border:1px solid #555;background:#000"></div>
<div class="a" style="left:1024px;top:91px;width:613px;height:1px;background:#555;"></div>
<div class="a" style="left:1024px;top:134px;width:613px;height:1px;background:#555;"></div>
<div class="a" style="left:1024px;top:176px;width:613px;height:1px;background:#555;"></div>
<div class="t" style="left:1025px;top:87.73px;font-size:8px;font-weight:400;color:#4a4a4a;letter-spacing:-0.2px;">0.08 sec</div>
<svg style="left:0;top:0" width="1852" height="190"><defs><clipPath id="c1022"><rect x="1024" y="91" width="613" height="90"/></clipPath></defs><path clip-path="url(#c1022)" d="M1023.00 147.11 L1023.34 151.25 L1023.68 143.96 L1024.02 129.14 L1024.36 136.52 L1024.70 152.19 L1025.04 148.61 L1025.38 146.01 L1025.72 147.40 L1026.06 143.07 L1026.40 137.34 L1026.74 144.20 L1027.08 135.82 L1027.42 153.25 L1027.76 152.87 L1028.10 134.60 L1028.44 148.13 L1028.78 144.80 L1029.12 140.77 L1029.46 145.53 L1029.80 152.58 L1030.14 142.50 L1030.48 155.58 L1030.82 152.88 L1031.16 154.36 L1031.50 148.21 L1031.84 150.53 L1032.18 152.53 L1032.52 152.86 L1032.86 153.80 L1033.20 147.87 L1033.54 141.92 L1033.88 145.12 L1034.22 142.70 L1034.56 140.13 L1034.90 141.15 L1035.24 142.44 L1035.58 151.38 L1035.92 147.66 L1036.26 137.30 L1036.60 142.38 L1036.94 149.38 L1037.28 142.56 L1037.62 149.61 L1037.96 154.90 L1038.30 142.82 L1038.64 140.29 L1038.98 142.77 L1039.32 150.26 L1039.66 159.04 L1040.00 137.81 L1040.34 158.43 L1040.68 142.14 L1041.02 151.29 L1041.36 155.17 L1041.70 140.24 L1042.04 156.28 L1042.38 153.81 L1042.72 144.25 L1043.06 149.73 L1043.40 152.01 L1043.74 142.39 L1044.08 161.71 L1044.42 150.24 L1044.76 165.14 L1045.10 149.49 L1045.44 147.71 L1045.78 158.44 L1046.12 141.82 L1046.46 150.99 L1046.80 150.50 L1047.14 157.14 L1047.48 135.72 L1047.82 155.31 L1048.16 135.45 L1048.50 138.30 L1048.84 152.41 L1049.18 151.37 L1049.52 153.29 L1049.86 142.09 L1050.20 139.01 L1050.54 139.44 L1050.88 142.60 L1051.22 135.05 L1051.56 144.06 L1051.90 136.32 L1052.24 128.10 L1052.58 140.75 L1052.92 133.08 L1053.26 140.34 L1053.60 137.13 L1053.94 149.74 L1054.28 133.38 L1054.62 146.36 L1054.96 139.58 L1055.30 149.03 L1055.64 141.90 L1055.98 146.46 L1056.32 133.12 L1056.66 137.99 L1057.00 140.11 L1057.34 141.31 L1057.68 134.51 L1058.02 144.79 L1058.36 141.49 L1058.70 142.23 L1059.04 151.66 L1059.38 165.76 L1059.72 146.55 L1060.06 150.55 L1060.40 157.21 L1060.74 152.27 L1061.08 149.18 L1061.42 149.63 L1061.76 150.13 L1062.10 153.34 L1062.44 143.85 L1062.78 140.02 L1063.12 163.56 L1063.46 154.26 L1063.80 140.42 L1064.14 139.97 L1064.48 139.05 L1064.82 149.36 L1065.16 154.58 L1065.50 133.32 L1065.84 142.02 L1066.18 136.03 L1066.52 148.41 L1066.86 140.46 L1067.20 144.38 L1067.54 133.45 L1067.88 135.09 L1068.22 138.90 L1068.56 146.04 L1068.90 147.75 L1069.24 135.41 L1069.58 146.44 L1069.92 151.83 L1070.26 124.68 L1070.60 135.46 L1070.94 133.10 L1071.28 132.85 L1071.62 128.26 L1071.96 119.10 L1072.30 117.64 L1072.64 124.19 L1072.98 149.11 L1073.32 131.04 L1073.66 129.17 L1074.00 131.24 L1074.34 135.51 L1074.68 124.87 L1075.02 128.35 L1075.36 125.94 L1075.70 132.59 L1076.04 140.28 L1076.38 145.67 L1076.72 127.06 L1077.06 138.30 L1077.40 141.97 L1077.74 123.85 L1078.08 143.40 L1078.42 133.19 L1078.76 133.56 L1079.10 145.79 L1079.44 129.28 L1079.78 127.01 L1080.12 129.29 L1080.46 135.60 L1080.80 136.48 L1081.14 132.03 L1081.48 130.64 L1081.82 130.53 L1082.16 127.31 L1082.50 132.18 L1082.84 131.64 L1083.18 130.77 L1083.52 121.17 L1083.86 124.33 L1084.20 131.14 L1084.54 125.73 L1084.88 117.57 L1085.22 142.31 L1085.56 124.24 L1085.90 125.96 L1086.24 127.63 L1086.58 132.33 L1086.92 117.66 L1087.26 122.13 L1087.60 130.88 L1087.94 128.62 L1088.28 138.30 L1088.62 132.84 L1088.96 147.22 L1089.30 134.02 L1089.64 113.92 L1089.98 138.84 L1090.32 128.38 L1090.66 135.80 L1091.00 133.39 L1091.34 137.35 L1091.68 136.51 L1092.02 132.06 L1092.36 134.66 L1092.70 141.88 L1093.04 136.35 L1093.38 134.55 L1093.72 137.94 L1094.06 125.77 L1094.40 131.67 L1094.74 126.20 L1095.08 130.59 L1095.42 135.89 L1095.76 137.16 L1096.10 123.54 L1096.44 125.54 L1096.78 118.58 L1097.12 122.08 L1097.46 122.07 L1097.80 127.40 L1098.14 116.06 L1098.48 119.16 L1098.82 122.83 L1099.16 128.89 L1099.50 126.05 L1099.84 114.29 L1100.18 119.17 L1100.52 131.66 L1100.86 117.99 L1101.20 102.57 L1101.54 126.99 L1101.88 116.04 L1102.22 118.07 L1102.56 131.73 L1102.90 108.08 L1103.24 126.73 L1103.58 116.12 L1103.92 119.34 L1104.26 116.16 L1104.60 132.60 L1104.94 127.11 L1105.28 133.38 L1105.62 115.09 L1105.96 114.47 L1106.30 121.97 L1106.64 120.64 L1106.98 116.57 L1107.32 112.91 L1107.66 118.76 L1108.00 119.97 L1108.34 113.78 L1108.68 116.32 L1109.02 135.64 L1109.36 117.83 L1109.70 103.71 L1110.04 123.90 L1110.38 117.95 L1110.72 113.99 L1111.06 122.04 L1111.40 124.40 L1111.74 134.00 L1112.08 126.70 L1112.42 109.77 L1112.76 112.77 L1113.10 125.97 L1113.44 112.69 L1113.78 101.90 L1114.12 131.26 L1114.46 112.64 L1114.80 120.91 L1115.14 113.16 L1115.48 115.01 L1115.82 93.07 L1116.16 115.19 L1116.50 104.10 L1116.84 110.64 L1117.18 111.02 L1117.52 106.02 L1117.86 109.92 L1118.20 119.49 L1118.54 112.47 L1118.88 112.20 L1119.22 116.59 L1119.56 119.32 L1119.90 113.10 L1120.24 114.35 L1120.58 95.03 L1120.92 139.77 L1121.26 121.30 L1121.60 113.23 L1121.94 123.75 L1122.28 130.45 L1122.62 116.20 L1122.96 107.60 L1123.30 110.16 L1123.64 102.75 L1123.98 95.48 L1124.32 125.81 L1124.66 117.15 L1125.00 102.80 L1125.34 115.49 L1125.68 117.24 L1126.02 121.94 L1126.36 137.26 L1126.70 124.29 L1127.04 103.55 L1127.38 116.71 L1127.72 117.34 L1128.06 119.36 L1128.40 125.66 L1128.74 115.57 L1129.08 130.00 L1129.42 99.20 L1129.76 116.30 L1130.10 103.17 L1130.44 116.12 L1130.78 131.89 L1131.12 131.16 L1131.46 124.39 L1131.80 115.35 L1132.14 111.16 L1132.48 113.73 L1132.82 125.51 L1133.16 131.43 L1133.50 118.58 L1133.84 117.07 L1134.18 129.80 L1134.52 131.09 L1134.86 132.56 L1135.20 106.32 L1135.54 120.06 L1135.88 112.38 L1136.22 115.57 L1136.56 120.46 L1136.90 102.64 L1137.24 133.34 L1137.58 128.52 L1137.92 121.00 L1138.26 124.65 L1138.60 131.17 L1138.94 126.60 L1139.28 127.68 L1139.62 125.64 L1139.96 118.47 L1140.30 123.31 L1140.64 126.62 L1140.98 122.63 L1141.32 124.42 L1141.66 124.77 L1142.00 134.25 L1142.34 127.92 L1142.68 112.49 L1143.02 130.04 L1143.36 115.48 L1143.70 122.67 L1144.04 116.11 L1144.38 124.27 L1144.72 115.79 L1145.06 126.79 L1145.40 113.42 L1145.74 116.67 L1146.08 135.30 L1146.42 108.30 L1146.76 122.76 L1147.10 114.40 L1147.44 112.07 L1147.78 111.15 L1148.12 106.70 L1148.46 125.94 L1148.80 120.35 L1149.14 127.67 L1149.48 115.47 L1149.82 130.71 L1150.16 117.00 L1150.50 113.29 L1150.84 118.23 L1151.18 133.28 L1151.52 126.30 L1151.86 123.54 L1152.20 118.30 L1152.54 140.88 L1152.88 110.56 L1153.22 126.92 L1153.56 122.77 L1153.90 129.52 L1154.24 125.15 L1154.58 125.57 L1154.92 119.61 L1155.26 115.11 L1155.60 126.65 L1155.94 130.10 L1156.28 149.17 L1156.62 119.13 L1156.96 131.75 L1157.30 111.92 L1157.64 133.49 L1157.98 123.93 L1158.32 135.01 L1158.66 128.51 L1159.00 121.75 L1159.34 119.53 L1159.68 140.35 L1160.02 113.62 L1160.36 127.65 L1160.70 131.76 L1161.04 139.18 L1161.38 150.37 L1161.72 130.98 L1162.06 147.52 L1162.40 128.18 L1162.74 140.58 L1163.08 137.04 L1163.42 144.41 L1163.76 131.01 L1164.10 145.72 L1164.44 131.43 L1164.78 128.95 L1165.12 126.49 L1165.46 136.61 L1165.80 146.11 L1166.14 152.28 L1166.48 141.59 L1166.82 134.17 L1167.16 126.75 L1167.50 156.13 L1167.84 138.34 L1168.18 153.26 L1168.52 147.46 L1168.86 136.32 L1169.20 151.45 L1169.54 140.47 L1169.88 140.16 L1170.22 162.43 L1170.56 142.02 L1170.90 164.94 L1171.24 158.28 L1171.58 150.24 L1171.92 160.52 L1172.26 136.60 L1172.60 145.71 L1172.94 135.64 L1173.28 153.31 L1173.62 137.82 L1173.96 150.51 L1174.30 140.21 L1174.64 150.61 L1174.98 161.82 L1175.32 148.23 L1175.66 160.07 L1176.00 137.89 L1176.34 142.33 L1176.68 132.54 L1177.02 149.30 L1177.36 141.72 L1177.70 150.77 L1178.04 149.16 L1178.38 157.17 L1178.72 141.29 L1179.06 138.80 L1179.40 139.94 L1179.74 152.77 L1180.08 146.53 L1180.42 147.27 L1180.76 137.00 L1181.10 152.98 L1181.44 139.02 L1181.78 165.78 L1182.12 151.78 L1182.46 145.74 L1182.80 155.50 L1183.14 135.61 L1183.48 149.40 L1183.82 146.92 L1184.16 128.99 L1184.50 136.50 L1184.84 153.83 L1185.18 152.62 L1185.52 134.96 L1185.86 152.27 L1186.20 156.45 L1186.54 152.03 L1186.88 147.09 L1187.22 133.06 L1187.56 129.87 L1187.90 155.33 L1188.24 171.68 L1188.58 144.51 L1188.92 146.37 L1189.26 140.43 L1189.60 156.73 L1189.94 144.70 L1190.28 139.07 L1190.62 145.25 L1190.96 143.26 L1191.30 148.75 L1191.64 142.09 L1191.98 156.55 L1192.32 122.29 L1192.66 145.10 L1193.00 136.94 L1193.34 169.43 L1193.68 146.07 L1194.02 153.63 L1194.36 146.53 L1194.70 147.23 L1195.04 147.94 L1195.38 151.76 L1195.72 159.44 L1196.06 141.97 L1196.40 153.37 L1196.74 131.35 L1197.08 156.81 L1197.42 135.71 L1197.76 131.85 L1198.10 163.37 L1198.44 133.76 L1198.78 130.82 L1199.12 163.50 L1199.46 152.95 L1199.80 154.75 L1200.14 129.12 L1200.48 141.40 L1200.82 116.15 L1201.16 141.87 L1201.50 160.27 L1201.84 145.57 L1202.18 169.40 L1202.52 148.00 L1202.86 149.82 L1203.20 147.87 L1203.54 150.78 L1203.88 134.95 L1204.22 159.30 L1204.56 130.89 L1204.90 130.98 L1205.24 133.31 L1205.58 130.81 L1205.92 110.69 L1206.26 139.98 L1206.60 122.55 L1206.94 130.24 L1207.28 142.58 L1207.62 134.90 L1207.96 122.10 L1208.30 159.01 L1208.64 151.97 L1208.98 129.12 L1209.32 147.95 L1209.66 116.09 L1210.00 139.09 L1210.34 127.62 L1210.68 159.46 L1211.02 130.31 L1211.36 116.98 L1211.70 137.22 L1212.04 118.58 L1212.38 148.08 L1212.72 125.70 L1213.06 155.80 L1213.40 154.77 L1213.74 136.27 L1214.08 110.43 L1214.42 142.86 L1214.76 143.61 L1215.10 121.70 L1215.44 149.50 L1215.78 149.12 L1216.12 158.57 L1216.46 154.80 L1216.80 139.65 L1217.14 123.99 L1217.48 139.17 L1217.82 150.53 L1218.16 114.89 L1218.50 139.88 L1218.84 128.14 L1219.18 144.27 L1219.52 153.37 L1219.86 146.60 L1220.20 145.30 L1220.54 132.65 L1220.88 142.68 L1221.22 152.92 L1221.56 156.29 L1221.90 148.27 L1222.24 155.96 L1222.58 108.24 L1222.92 141.51 L1223.26 149.85 L1223.60 137.91 L1223.94 117.98 L1224.28 132.61 L1224.62 103.46 L1224.96 112.97 L1225.30 110.94 L1225.64 133.61 L1225.98 134.37 L1226.32 142.38 L1226.66 114.45 L1227.00 116.11 L1227.34 133.33 L1227.68 160.21 L1228.02 146.99 L1228.36 119.65 L1228.70 138.71 L1229.04 132.80 L1229.38 149.32 L1229.72 105.31 L1230.06 154.22 L1230.40 110.71 L1230.74 126.40 L1231.08 152.79 L1231.42 148.79 L1231.76 159.97 L1232.10 125.66 L1232.44 149.48 L1232.78 101.98 L1233.12 137.76 L1233.46 141.17 L1233.80 120.24 L1234.14 130.51 L1234.48 137.66 L1234.82 111.16 L1235.16 110.00 L1235.50 154.22 L1235.84 137.53 L1236.18 146.56 L1236.52 118.29 L1236.86 136.95 L1237.20 131.25 L1237.54 164.60 L1237.88 102.35 L1238.22 126.35 L1238.56 139.23 L1238.90 137.27 L1239.24 131.97 L1239.58 156.64 L1239.92 139.61 L1240.26 123.17 L1240.60 114.99 L1240.94 129.94 L1241.28 102.24 L1241.62 108.20 L1241.96 145.64 L1242.30 132.30 L1242.64 121.96 L1242.98 98.84 L1243.32 134.49 L1243.66 119.13 L1244.00 107.69 L1244.34 107.66 L1244.68 144.61 L1245.02 113.74 L1245.36 87.00 L1245.70 128.21 L1246.04 128.74 L1246.38 116.61 L1246.72 132.73 L1247.06 126.09 L1247.40 123.80 L1247.74 100.84 L1248.08 114.65 L1248.42 125.36 L1248.76 110.11 L1249.10 106.44 L1249.44 113.37 L1249.78 118.96 L1250.12 136.98 L1250.46 140.27 L1250.80 109.87 L1251.14 112.04 L1251.48 129.07 L1251.82 122.86 L1252.16 82.12 L1252.50 123.52 L1252.84 94.27 L1253.18 119.96 L1253.52 127.89 L1253.86 101.45 L1254.20 99.71 L1254.54 138.72 L1254.88 101.99 L1255.22 101.89 L1255.56 107.48 L1255.90 110.05 L1256.24 106.45 L1256.58 109.81 L1256.92 119.08 L1257.26 119.22 L1257.60 86.33 L1257.94 124.33 L1258.28 121.74 L1258.62 109.55 L1258.96 114.32 L1259.30 117.38 L1259.64 108.88 L1259.98 117.39 L1260.32 106.78 L1260.66 92.98 L1261.00 138.82 L1261.34 128.45 L1261.68 99.16 L1262.02 95.60 L1262.36 155.93 L1262.70 140.23 L1263.04 133.44 L1263.38 120.14 L1263.72 137.23 L1264.06 138.80 L1264.40 121.14 L1264.74 74.21 L1265.08 114.31 L1265.42 122.23 L1265.76 122.41 L1266.10 115.44 L1266.44 132.93 L1266.78 125.01 L1267.12 132.89 L1267.46 139.47 L1267.80 100.72 L1268.14 122.66 L1268.48 107.08 L1268.82 132.91 L1269.16 126.19 L1269.50 104.44 L1269.84 125.81 L1270.18 125.62 L1270.52 121.50 L1270.86 132.02 L1271.20 127.38 L1271.54 125.02 L1271.88 111.13 L1272.22 156.26 L1272.56 127.53 L1272.90 158.51 L1273.24 127.89 L1273.58 108.92 L1273.92 149.59 L1274.26 111.02 L1274.60 119.81 L1274.94 117.35 L1275.28 107.98 L1275.62 147.95 L1275.96 129.50 L1276.30 118.16 L1276.64 134.72 L1276.98 128.65 L1277.32 134.99 L1277.66 124.20 L1278.00 133.79 L1278.34 132.82 L1278.68 108.32 L1279.02 120.46 L1279.36 129.65 L1279.70 122.11 L1280.04 129.00 L1280.38 102.17 L1280.72 137.39 L1281.06 127.60 L1281.40 143.02 L1281.74 134.35 L1282.08 112.19 L1282.42 125.08 L1282.76 132.04 L1283.10 152.87 L1283.44 123.42 L1283.78 158.65 L1284.12 123.45 L1284.46 119.78 L1284.80 129.58 L1285.14 121.09 L1285.48 143.02 L1285.82 101.19 L1286.16 136.81 L1286.50 120.79 L1286.84 107.68 L1287.18 109.01 L1287.52 132.91 L1287.86 123.97 L1288.20 117.73 L1288.54 135.31 L1288.88 137.78 L1289.22 159.12 L1289.56 137.20 L1289.90 139.75 L1290.24 142.18 L1290.58 110.53 L1290.92 132.60 L1291.26 138.11 L1291.60 158.10 L1291.94 136.14 L1292.28 139.60 L1292.62 130.04 L1292.96 143.05 L1293.30 139.44 L1293.64 125.11 L1293.98 122.70 L1294.32 110.01 L1294.66 124.20 L1295.00 133.96 L1295.34 136.26 L1295.68 147.62 L1296.02 107.51 L1296.36 140.41 L1296.70 133.07 L1297.04 111.49 L1297.38 119.39 L1297.72 125.16 L1298.06 132.16 L1298.40 157.42 L1298.74 133.44 L1299.08 126.54 L1299.42 112.07 L1299.76 130.95 L1300.10 126.77 L1300.44 137.35 L1300.78 105.87 L1301.12 128.57 L1301.46 116.10 L1301.80 97.26 L1302.14 118.07 L1302.48 111.20 L1302.82 123.47 L1303.16 97.30 L1303.50 114.35 L1303.84 115.23 L1304.18 133.54 L1304.52 135.84 L1304.86 115.96 L1305.20 117.53 L1305.54 133.39 L1305.88 115.16 L1306.22 109.87 L1306.56 124.30 L1306.90 121.97 L1307.24 111.07 L1307.58 119.62 L1307.92 115.70 L1308.26 130.62 L1308.60 144.84 L1308.94 130.24 L1309.28 140.45 L1309.62 130.35 L1309.96 137.20 L1310.30 137.81 L1310.64 121.79 L1310.98 122.95 L1311.32 134.40 L1311.66 149.59 L1312.00 137.85 L1312.34 116.62 L1312.68 130.64 L1313.02 113.77 L1313.36 128.32 L1313.70 118.69 L1314.04 137.98 L1314.38 119.79 L1314.72 142.74 L1315.06 164.95 L1315.40 154.93 L1315.74 145.38 L1316.08 141.55 L1316.42 138.13 L1316.76 134.68 L1317.10 139.48 L1317.44 131.16 L1317.78 147.95 L1318.12 147.50 L1318.46 137.64 L1318.80 140.51 L1319.14 144.20 L1319.48 147.46 L1319.82 130.80 L1320.16 120.78 L1320.50 124.20 L1320.84 153.57 L1321.18 150.98 L1321.52 134.83 L1321.86 136.93 L1322.20 137.03 L1322.54 142.33 L1322.88 137.15 L1323.22 156.36 L1323.56 143.57 L1323.90 132.00 L1324.24 144.02 L1324.58 130.86 L1324.92 137.44 L1325.26 145.01 L1325.60 140.15 L1325.94 122.01 L1326.28 151.42 L1326.62 121.09 L1326.96 123.31 L1327.30 116.47 L1327.64 117.15 L1327.98 136.65 L1328.32 152.82 L1328.66 155.33 L1329.00 148.23 L1329.34 154.20 L1329.68 150.94 L1330.02 150.31 L1330.36 153.04 L1330.70 156.24 L1331.04 146.44 L1331.38 146.93 L1331.72 151.11 L1332.06 118.86 L1332.40 150.13 L1332.74 131.81 L1333.08 164.48 L1333.42 123.22 L1333.76 141.37 L1334.10 122.76 L1334.44 146.54 L1334.78 127.97 L1335.12 157.62 L1335.46 140.74 L1335.80 166.09 L1336.14 143.10 L1336.48 145.65 L1336.82 161.73 L1337.16 154.89 L1337.50 140.76 L1337.84 154.13 L1338.18 153.53 L1338.52 145.22 L1338.86 149.10 L1339.20 153.67 L1339.54 147.39 L1339.88 143.75 L1340.22 130.99 L1340.56 167.17 L1340.90 145.04 L1341.24 129.52 L1341.58 144.45 L1341.92 149.91 L1342.26 152.19 L1342.60 135.57 L1342.94 160.60 L1343.28 143.66 L1343.62 143.20 L1343.96 153.74 L1344.30 157.83 L1344.64 162.80 L1344.98 140.66 L1345.32 147.72 L1345.66 143.55 L1346.00 133.24 L1346.34 138.64 L1346.68 137.80 L1347.02 136.38 L1347.36 136.89 L1347.70 134.27 L1348.04 122.47 L1348.38 134.13 L1348.72 153.63 L1349.06 144.02 L1349.40 131.69 L1349.74 150.68 L1350.08 139.54 L1350.42 140.77 L1350.76 141.01 L1351.10 149.99 L1351.44 143.23 L1351.78 152.85 L1352.12 142.23 L1352.46 143.13 L1352.80 147.52 L1353.14 148.01 L1353.48 156.56 L1353.82 137.36 L1354.16 132.70 L1354.50 151.21 L1354.84 138.11 L1355.18 132.36 L1355.52 130.88 L1355.86 154.89 L1356.20 151.05 L1356.54 141.18 L1356.88 137.20 L1357.22 139.42 L1357.56 132.35 L1357.90 127.14 L1358.24 134.71 L1358.58 138.59 L1358.92 149.90 L1359.26 175.12 L1359.60 146.19 L1359.94 121.58 L1360.28 142.73 L1360.62 143.32 L1360.96 137.50 L1361.30 148.18 L1361.64 152.98 L1361.98 130.04 L1362.32 133.82 L1362.66 136.71 L1363.00 145.67 L1363.34 140.46 L1363.68 151.57 L1364.02 130.83 L1364.36 138.94 L1364.70 118.50 L1365.04 137.54 L1365.38 134.78 L1365.72 144.91 L1366.06 121.50 L1366.40 138.30 L1366.74 129.30 L1367.08 136.22 L1367.42 137.08 L1367.76 125.02 L1368.10 138.52 L1368.44 121.19 L1368.78 119.60 L1369.12 110.86 L1369.46 132.99 L1369.80 114.22 L1370.14 113.89 L1370.48 130.39 L1370.82 132.74 L1371.16 120.94 L1371.50 124.29 L1371.84 127.48 L1372.18 128.45 L1372.52 120.13 L1372.86 131.78 L1373.20 122.41 L1373.54 124.82 L1373.88 126.53 L1374.22 129.46 L1374.56 131.43 L1374.90 111.40 L1375.24 133.04 L1375.58 131.85 L1375.92 116.88 L1376.26 154.31 L1376.60 137.91 L1376.94 146.11 L1377.28 129.60 L1377.62 133.56 L1377.96 131.75 L1378.30 139.94 L1378.64 123.97 L1378.98 140.70 L1379.32 130.92 L1379.66 143.75 L1380.00 135.16 L1380.34 115.52 L1380.68 134.17 L1381.02 131.40 L1381.36 127.59 L1381.70 122.31 L1382.04 129.92 L1382.38 117.49 L1382.72 130.07 L1383.06 117.63 L1383.40 105.16 L1383.74 126.08 L1384.08 124.79 L1384.42 104.03 L1384.76 136.69 L1385.10 154.65 L1385.44 148.62 L1385.78 124.79 L1386.12 135.46 L1386.46 130.68 L1386.80 118.42 L1387.14 121.27 L1387.48 147.14 L1387.82 140.45 L1388.16 112.27 L1388.50 128.60 L1388.84 110.13 L1389.18 140.12 L1389.52 131.96 L1389.86 107.05 L1390.20 123.56 L1390.54 126.99 L1390.88 113.45 L1391.22 120.12 L1391.56 111.15 L1391.90 113.93 L1392.24 130.43 L1392.58 106.45 L1392.92 127.89 L1393.26 98.61 L1393.60 117.36 L1393.94 130.57 L1394.28 131.81 L1394.62 115.62 L1394.96 119.85 L1395.30 109.92 L1395.64 132.84 L1395.98 130.75 L1396.32 134.96 L1396.66 128.09 L1397.00 112.23 L1397.34 93.51 L1397.68 122.99 L1398.02 123.17 L1398.36 121.13 L1398.70 120.15 L1399.04 119.52 L1399.38 109.44 L1399.72 95.96 L1400.06 141.64 L1400.40 136.35 L1400.74 124.40 L1401.08 107.69 L1401.42 126.84 L1401.76 124.62 L1402.10 148.05 L1402.44 121.08 L1402.78 128.48 L1403.12 118.75 L1403.46 121.85 L1403.80 122.38 L1404.14 98.21 L1404.48 128.52 L1404.82 134.98 L1405.16 118.85 L1405.50 120.57 L1405.84 128.66 L1406.18 120.23 L1406.52 109.64 L1406.86 110.19 L1407.20 108.61 L1407.54 121.97 L1407.88 110.04 L1408.22 115.04 L1408.56 105.67 L1408.90 134.11 L1409.24 123.98 L1409.58 114.83 L1409.92 101.22 L1410.26 133.45 L1410.60 107.95 L1410.94 121.92 L1411.28 104.37 L1411.62 119.62 L1411.96 103.23 L1412.30 112.29 L1412.64 131.56 L1412.98 117.48 L1413.32 115.16 L1413.66 106.05 L1414.00 106.30 L1414.34 123.27 L1414.68 107.08 L1415.02 120.47 L1415.36 105.52 L1415.70 123.05 L1416.04 127.59 L1416.38 130.02 L1416.72 112.71 L1417.06 144.07 L1417.40 120.98 L1417.74 132.70 L1418.08 142.77 L1418.42 155.05 L1418.76 105.26 L1419.10 135.93 L1419.44 121.77 L1419.78 142.99 L1420.12 118.18 L1420.46 129.53 L1420.80 125.13 L1421.14 134.69 L1421.48 129.32 L1421.82 130.88 L1422.16 107.75 L1422.50 140.36 L1422.84 119.01 L1423.18 152.41 L1423.52 125.36 L1423.86 115.82 L1424.20 133.16 L1424.54 126.44 L1424.88 148.52 L1425.22 116.20 L1425.56 123.17 L1425.90 146.93 L1426.24 105.50 L1426.58 96.81 L1426.92 131.16 L1427.26 132.51 L1427.60 129.26 L1427.94 120.58 L1428.28 118.62 L1428.62 120.95 L1428.96 126.67 L1429.30 115.20 L1429.64 113.34 L1429.98 138.13 L1430.32 131.24 L1430.66 106.97 L1431.00 111.13 L1431.34 102.78 L1431.68 127.21 L1432.02 132.98 L1432.36 137.25 L1432.70 110.02 L1433.04 128.73 L1433.38 141.74 L1433.72 156.27 L1434.06 130.10 L1434.40 152.06 L1434.74 139.75 L1435.08 125.11 L1435.42 142.47 L1435.76 115.44 L1436.10 121.78 L1436.44 123.38 L1436.78 158.56 L1437.12 123.90 L1437.46 148.38 L1437.80 147.71 L1438.14 129.70 L1438.48 142.54 L1438.82 144.12 L1439.16 123.35 L1439.50 127.32 L1439.84 164.33 L1440.18 123.24 L1440.52 130.75 L1440.86 131.06 L1441.20 127.71 L1441.54 129.48 L1441.88 122.14 L1442.22 112.69 L1442.56 120.78 L1442.90 115.74 L1443.24 129.65 L1443.58 105.57 L1443.92 128.41 L1444.26 108.60 L1444.60 118.15 L1444.94 119.69 L1445.28 101.10 L1445.62 107.15 L1445.96 120.13 L1446.30 124.62 L1446.64 150.43 L1446.98 126.93 L1447.32 132.32 L1447.66 131.71 L1448.00 110.88 L1448.34 153.41 L1448.68 136.40 L1449.02 143.05 L1449.36 138.18 L1449.70 127.36 L1450.04 134.92 L1450.38 127.56 L1450.72 129.59 L1451.06 126.01 L1451.40 111.73 L1451.74 143.65 L1452.08 147.71 L1452.42 131.95 L1452.76 123.41 L1453.10 112.28 L1453.44 154.85 L1453.78 131.79 L1454.12 111.79 L1454.46 119.37 L1454.80 124.43 L1455.14 135.71 L1455.48 153.69 L1455.82 132.80 L1456.16 157.55 L1456.50 146.18 L1456.84 121.71 L1457.18 144.41 L1457.52 148.06 L1457.86 154.44 L1458.20 132.79 L1458.54 146.74 L1458.88 141.82 L1459.22 147.24 L1459.56 151.17 L1459.90 150.75 L1460.24 131.37 L1460.58 152.20 L1460.92 159.01 L1461.26 163.59 L1461.60 133.40 L1461.94 148.76 L1462.28 122.83 L1462.62 122.74 L1462.96 121.92 L1463.30 132.59 L1463.64 148.84 L1463.98 119.15 L1464.32 121.12 L1464.66 123.60 L1465.00 115.96 L1465.34 106.87 L1465.68 140.12 L1466.02 129.36 L1466.36 126.27 L1466.70 140.46 L1467.04 140.62 L1467.38 146.96 L1467.72 121.26 L1468.06 145.28 L1468.40 142.09 L1468.74 144.30 L1469.08 106.10 L1469.42 119.63 L1469.76 133.84 L1470.10 138.22 L1470.44 122.39 L1470.78 127.47 L1471.12 141.06 L1471.46 156.09 L1471.80 133.67 L1472.14 127.44 L1472.48 133.05 L1472.82 155.49 L1473.16 156.48 L1473.50 148.48 L1473.84 121.33 L1474.18 132.17 L1474.52 122.88 L1474.86 118.68 L1475.20 120.55 L1475.54 129.10 L1475.88 108.18 L1476.22 144.96 L1476.56 121.34 L1476.90 144.87 L1477.24 108.57 L1477.58 130.55 L1477.92 126.65 L1478.26 160.24 L1478.60 137.70 L1478.94 141.55 L1479.28 131.17 L1479.62 151.77 L1479.96 146.35 L1480.30 139.95 L1480.64 131.78 L1480.98 145.15 L1481.32 151.25 L1481.66 139.81 L1482.00 134.86 L1482.34 137.98 L1482.68 127.41 L1483.02 125.62 L1483.36 130.38 L1483.70 137.94 L1484.04 142.48 L1484.38 140.18 L1484.72 114.53 L1485.06 126.79 L1485.40 147.00 L1485.74 162.00 L1486.08 156.84 L1486.42 158.70 L1486.76 128.99 L1487.10 135.30 L1487.44 130.96 L1487.78 138.75 L1488.12 134.58 L1488.46 124.85 L1488.80 137.88 L1489.14 136.14 L1489.48 135.86 L1489.82 119.88 L1490.16 137.34 L1490.50 136.79 L1490.84 128.18 L1491.18 136.89 L1491.52 141.94 L1491.86 154.65 L1492.20 123.02 L1492.54 139.66 L1492.88 139.09 L1493.22 149.52 L1493.56 125.50 L1493.90 153.60 L1494.24 130.57 L1494.58 113.31 L1494.92 148.37 L1495.26 126.18 L1495.60 139.88 L1495.94 150.24 L1496.28 135.93 L1496.62 133.72 L1496.96 128.58 L1497.30 149.38 L1497.64 130.41 L1497.98 109.41 L1498.32 130.91 L1498.66 125.68 L1499.00 128.25 L1499.34 134.55 L1499.68 141.75 L1500.02 135.09 L1500.36 132.24 L1500.70 146.65 L1501.04 118.43 L1501.38 140.81 L1501.72 104.92 L1502.06 125.34 L1502.40 116.73 L1502.74 141.97 L1503.08 152.33 L1503.42 140.09 L1503.76 136.20 L1504.10 125.62 L1504.44 128.12 L1504.78 119.18 L1505.12 139.98 L1505.46 143.65 L1505.80 119.13 L1506.14 119.26 L1506.48 133.05 L1506.82 159.11 L1507.16 126.41 L1507.50 123.47 L1507.84 148.58 L1508.18 116.44 L1508.52 129.64 L1508.86 154.84 L1509.20 118.48 L1509.54 126.90 L1509.88 136.78 L1510.22 129.85 L1510.56 129.83 L1510.90 118.97 L1511.24 159.80 L1511.58 120.10 L1511.92 149.42 L1512.26 146.39 L1512.60 143.12 L1512.94 143.58 L1513.28 150.92 L1513.62 144.66 L1513.96 140.45 L1514.30 143.18 L1514.64 133.46 L1514.98 128.71 L1515.32 142.26 L1515.66 149.32 L1516.00 130.63 L1516.34 129.73 L1516.68 135.14 L1517.02 141.42 L1517.36 127.76 L1517.70 118.06 L1518.04 132.49 L1518.38 129.96 L1518.72 120.33 L1519.06 132.69 L1519.40 143.97 L1519.74 119.79 L1520.08 149.14 L1520.42 137.89 L1520.76 122.51 L1521.10 141.15 L1521.44 115.44 L1521.78 138.39 L1522.12 123.91 L1522.46 139.90 L1522.80 147.98 L1523.14 118.80 L1523.48 132.98 L1523.82 126.21 L1524.16 148.49 L1524.50 117.22 L1524.84 123.27 L1525.18 125.23 L1525.52 115.19 L1525.86 136.84 L1526.20 108.06 L1526.54 117.60 L1526.88 113.50 L1527.22 116.10 L1527.56 130.91 L1527.90 118.70 L1528.24 144.18 L1528.58 144.70 L1528.92 145.21 L1529.26 138.74 L1529.60 137.30 L1529.94 131.53 L1530.28 124.77 L1530.62 114.69 L1530.96 117.35 L1531.30 135.13 L1531.64 147.67 L1531.98 128.47 L1532.32 136.02 L1532.66 121.12 L1533.00 150.71 L1533.34 137.00 L1533.68 130.96 L1534.02 130.38 L1534.36 102.68 L1534.70 126.33 L1535.04 124.59 L1535.38 122.37 L1535.72 128.69 L1536.06 120.08 L1536.40 107.34 L1536.74 128.90 L1537.08 112.32 L1537.42 103.95 L1537.76 121.82 L1538.10 117.24 L1538.44 110.08 L1538.78 118.99 L1539.12 116.88 L1539.46 120.12 L1539.80 137.34 L1540.14 136.32 L1540.48 143.49 L1540.82 125.72 L1541.16 129.13 L1541.50 117.97 L1541.84 130.80 L1542.18 138.28 L1542.52 125.15 L1542.86 125.30 L1543.20 137.25 L1543.54 127.79 L1543.88 137.26 L1544.22 138.11 L1544.56 125.84 L1544.90 120.63 L1545.24 155.98 L1545.58 116.15 L1545.92 146.12 L1546.26 116.95 L1546.60 134.62 L1546.94 147.21 L1547.28 126.52 L1547.62 138.29 L1547.96 129.94 L1548.30 114.25 L1548.64 114.71 L1548.98 126.44 L1549.32 124.82 L1549.66 123.78 L1550.00 118.23 L1550.34 117.95 L1550.68 115.13 L1551.02 113.36 L1551.36 100.24 L1551.70 112.41 L1552.04 136.86 L1552.38 118.90 L1552.72 113.00 L1553.06 135.05 L1553.40 121.46 L1553.74 108.88 L1554.08 125.00 L1554.42 147.69 L1554.76 123.25 L1555.10 137.73 L1555.44 130.87 L1555.78 146.26 L1556.12 128.21 L1556.46 123.83 L1556.80 138.10 L1557.14 131.47 L1557.48 137.45 L1557.82 139.87 L1558.16 116.55 L1558.50 137.93 L1558.84 108.50 L1559.18 118.97 L1559.52 122.12 L1559.86 149.33 L1560.20 126.23 L1560.54 120.02 L1560.88 138.19 L1561.22 125.82 L1561.56 136.45 L1561.90 124.54 L1562.24 114.68 L1562.58 110.71 L1562.92 120.75 L1563.26 104.25 L1563.60 117.97 L1563.94 139.70 L1564.28 114.51 L1564.62 137.82 L1564.96 124.11 L1565.30 122.15 L1565.64 104.63 L1565.98 133.32 L1566.32 106.32 L1566.66 104.09 L1567.00 124.15 L1567.34 134.71 L1567.68 122.45 L1568.02 137.26 L1568.36 114.43 L1568.70 107.87 L1569.04 108.32 L1569.38 125.66 L1569.72 141.50 L1570.06 126.55 L1570.40 130.35 L1570.74 139.72 L1571.08 121.71 L1571.42 118.01 L1571.76 123.98 L1572.10 131.89 L1572.44 138.77 L1572.78 111.48 L1573.12 135.11 L1573.46 139.53 L1573.80 120.44 L1574.14 145.82 L1574.48 117.34 L1574.82 130.99 L1575.16 122.14 L1575.50 116.64 L1575.84 128.60 L1576.18 97.78 L1576.52 130.11 L1576.86 125.25 L1577.20 143.67 L1577.54 130.32 L1577.88 110.13 L1578.22 112.46 L1578.56 117.67 L1578.90 123.90 L1579.24 126.68 L1579.58 137.35 L1579.92 107.96 L1580.26 116.23 L1580.60 126.47 L1580.94 135.05 L1581.28 141.72 L1581.62 143.90 L1581.96 120.81 L1582.30 154.17 L1582.64 135.83 L1582.98 128.04 L1583.32 121.56 L1583.66 105.67 L1584.00 111.18 L1584.34 118.16 L1584.68 116.99 L1585.02 121.38 L1585.36 93.01 L1585.70 116.27 L1586.04 107.39 L1586.38 136.25 L1586.72 122.12 L1587.06 129.44 L1587.40 116.54 L1587.74 133.36 L1588.08 130.62 L1588.42 109.25 L1588.76 126.24 L1589.10 115.50 L1589.44 119.72 L1589.78 103.60 L1590.12 112.51 L1590.46 125.09 L1590.80 116.54 L1591.14 128.15 L1591.48 130.98 L1591.82 117.68 L1592.16 109.16 L1592.50 123.97 L1592.84 130.78 L1593.18 128.29 L1593.52 136.44 L1593.86 121.21 L1594.20 119.95 L1594.54 129.84 L1594.88 122.46 L1595.22 145.44 L1595.56 129.92 L1595.90 129.22 L1596.24 134.06 L1596.58 140.83 L1596.92 148.16 L1597.26 130.11 L1597.60 140.16 L1597.94 129.94 L1598.28 153.99 L1598.62 136.26 L1598.96 126.19 L1599.30 132.54 L1599.64 139.89 L1599.98 125.95 L1600.32 125.94 L1600.66 120.52 L1601.00 119.87 L1601.34 127.91 L1601.68 116.40 L1602.02 122.55 L1602.36 120.87 L1602.70 97.93 L1603.04 131.03 L1603.38 123.89 L1603.72 155.03 L1604.06 118.16 L1604.40 136.16 L1604.74 106.53 L1605.08 115.65 L1605.42 132.30 L1605.76 132.35 L1606.10 136.11 L1606.44 125.09 L1606.78 118.83 L1607.12 123.95 L1607.46 146.38 L1607.80 129.30 L1608.14 129.94 L1608.48 124.01 L1608.82 117.09 L1609.16 106.53 L1609.50 128.66 L1609.84 125.28 L1610.18 124.83 L1610.52 124.35 L1610.86 120.17 L1611.20 128.96 L1611.54 135.57 L1611.88 120.42 L1612.22 106.47 L1612.56 144.15 L1612.90 127.34 L1613.24 124.44 L1613.58 116.70 L1613.92 140.88 L1614.26 146.65 L1614.60 128.34 L1614.94 128.93 L1615.28 138.63 L1615.62 140.71 L1615.96 136.61 L1616.30 150.11 L1616.64 128.30 L1616.98 102.12 L1617.32 129.92 L1617.66 136.29 L1618.00 140.91 L1618.34 112.97 L1618.68 134.20 L1619.02 149.30 L1619.36 133.61 L1619.70 127.52 L1620.04 126.74 L1620.38 127.06 L1620.72 139.96 L1621.06 146.58 L1621.40 139.73 L1621.74 146.32 L1622.08 146.08 L1622.42 139.83 L1622.76 126.02 L1623.10 133.78 L1623.44 151.28 L1623.78 135.58 L1624.12 138.35 L1624.46 138.20 L1624.80 130.94 L1625.14 131.95 L1625.48 136.80 L1625.82 125.64 L1626.16 129.22 L1626.50 144.26 L1626.84 135.02 L1627.18 131.00 L1627.52 131.72 L1627.86 124.44 L1628.20 135.79 L1628.54 129.97 L1628.88 142.00 L1629.22 121.46 L1629.56 132.32 L1629.90 126.24 L1630.24 138.89 L1630.58 132.00 L1630.92 128.57 L1631.26 133.95 L1631.60 130.72 L1631.94 131.71 L1632.28 138.92 L1632.62 132.13 L1632.96 142.59 L1633.30 134.47 L1633.64 136.15 L1633.98 136.34 L1634.32 148.42 L1634.66 151.75 L1635.00 149.37 L1635.34 152.82 L1635.68 128.53 L1636.02 169.10 L1636.36 141.69 L1636.70 151.37" stroke="#00ccf5" stroke-width="1.4" fill="none" stroke-linejoin="bevel"/></svg>
<div class="a" style="left:238px;top:191px;width:1614px;height:39px;background:#821e82;"></div>
<div class="t" style="left:570.95px;width:1000px;text-align:center;top:200.38px;font-size:22px;font-weight:700;color:#f0e2f0;letter-spacing:0.9px">Audio I/O</div>
<div class="a" style="left:245px;top:237px;width:1607px;height:195px;background:#262626;"></div>
<div class="t" style="left:252.5px;top:248.61px;font-size:17px;font-weight:700;color:#ececec;letter-spacing:0.2px;">Miscellaneous</div>
<svg style="left:0;top:0" width="1" height="1"><path d="M387 252 L394.5 258.0 L387 264" stroke="#e0e0e0" stroke-width="1.7" fill="none"/></svg>
<div class="a" style="left:252px;top:284px;width:30px;height:30px;border:1px solid #444"></div>
<div class="a" style="left:258px;top:290px;width:18px;height:18px;border-radius:2.5px;background:#dddddd"></div>
<div class="t" style="left:293px;top:291.60px;font-size:15px;font-weight:400;color:#ececec;letter-spacing:0px;">Use full I/O framework</div>
<div class="a" style="left:252px;top:321px;width:1620px;height:30px;border:1px solid #444;background:#262626"></div>
<div class="a" style="left:385px;top:322px;width:1500px;height:28px;background:#555555;"></div>
<div class="t" style="left:256.3px;top:328.30px;font-size:15px;font-weight:400;color:#ececec;letter-spacing:-0.25px;">Processing latency</div>
<div class="t" style="left:390px;top:328.30px;font-size:15px;font-weight:400;color:#ececec;letter-spacing:-0.3px;">4096 samples</div>
<div class="a" style="left:252px;top:358px;width:1620px;height:30px;border:1px solid #444"></div>
<svg style="left:0;top:0" width="1" height="1">
<path d="M257.3 366.5 L259.5 368.59999999999997 L263.3 364.59999999999997 M257.3 372.79999999999995 L259.5 374.9 L263.3 370.9" stroke="#00ccff" stroke-width="1.7" fill="none"/>
<circle cx="259.2" cy="379.59999999999997" r="2" fill="#00ccff"/>
<rect x="266.6" y="365.59999999999997" width="10.6" height="2.6" rx="1.3" fill="#00ccff"/>
<rect x="266.6" y="372.0" width="10.6" height="2.6" rx="1.3" fill="#00ccff"/>
<rect x="264.3" y="378.29999999999995" width="12.9" height="2.6" rx="1.3" fill="#00ccff"/>
</svg>
<div class="t" style="left:293px;top:365.30px;font-size:15px;font-weight:400;color:#ececec;letter-spacing:-0.11px;">Synchronization between different sound cards...</div>
<div class="a" style="left:252px;top:395px;width:1620px;height:30px;border:1px solid #444"></div>
<svg style="left:0;top:0" width="1" height="1">
<path d="M257.3 403.5 L259.5 405.59999999999997 L263.3 401.59999999999997 M257.3 409.79999999999995 L259.5 411.9 L263.3 407.9" stroke="#00ccff" stroke-width="1.7" fill="none"/>
<circle cx="259.2" cy="416.59999999999997" r="2" fill="#00ccff"/>
<rect x="266.6" y="402.59999999999997" width="10.6" height="2.6" rx="1.3" fill="#00ccff"/>
<rect x="266.6" y="409.0" width="10.6" height="2.6" rx="1.3" fill="#00ccff"/>
<rect x="264.3" y="415.29999999999995" width="12.9" height="2.6" rx="1.3" fill="#00ccff"/>
</svg>
<div class="t" style="left:293px;top:402.30px;font-size:15px;font-weight:400;color:#ececec;letter-spacing:-0.37px;">Latency settings...</div>
<div class="a" style="left:245px;top:446px;width:1607px;height:32px;background:#821e82;"></div>
<div class="t" style="left:570.1500000000001px;width:1000px;text-align:center;top:453.61px;font-size:17px;font-weight:700;color:#f0e2f0;letter-spacing:0.3px">Plug-in</div>
<div class="a" style="left:245px;top:485px;width:822px;height:121px;background:#262626;"></div>
<div class="a" style="left:1074px;top:485px;width:778px;height:121px;background:#262626;"></div>
<div class="t" style="left:252.7px;top:496.31px;font-size:17px;font-weight:700;color:#ececec;letter-spacing:0.37px;">Low input level correction</div>
<svg style="left:0;top:0" width="1" height="1"><path d="M487.5 499.5 L495.0 505.6 L487.5 511.7" stroke="#e0e0e0" stroke-width="1.7" fill="none"/></svg>
<div class="a" style="left:252px;top:532px;width:808px;height:30px;background:#555555;"></div>
<div class="a" style="left:252.7px;top:532px;width:50.3px;height:30px;background:#ff6600;"></div>
<div class="t" style="left:257.4px;top:539.30px;font-size:15px;font-weight:400;color:#f8f8f8;letter-spacing:-0.4px;">Gain</div>
<div class="t" style="left:1005px;top:539.30px;font-size:15px;font-weight:400;color:#ececec;letter-spacing:-0.45px;">+2.0 dB</div>
<div class="t" style="left:1081.3px;top:496.81px;font-size:17px;font-weight:700;color:#ececec;letter-spacing:0.6px;">Plug-in output</div>
<div class="a" style="left:1081px;top:532px;width:800px;height:30px;border:1px solid #444"></div>
<div class="t" style="left:1085.5px;top:539.30px;font-size:15px;font-weight:400;color:#575757;letter-spacing:-0.05px;">Send to Winamp</div>
<div class="t" style="left:1209.6px;top:539.30px;font-size:15px;font-weight:400;color:#575757;letter-spacing:0.02px;">Separately processed streaming / HD / DAB+ output</div>
<div class="a" style="left:1081px;top:569px;width:800px;height:30px;border:1px solid #444;background:#ff6600"></div>
<div class="t" style="left:1086.5px;top:576.30px;font-size:15px;font-weight:400;color:#fff4ea;letter-spacing:0.05px;">Plug-in output level</div>
<div class="t" style="left:1773.8px;top:576.30px;font-size:15px;font-weight:400;color:#fff4ea;letter-spacing:-0.2px;">0.00 dB (100%)</div>
<div class="a" style="left:245px;top:613px;width:822px;height:40px;background:#262626;"></div>
<div class="a" style="left:1074px;top:613px;width:778px;height:40px;background:#555555;"></div>
<div class="t" style="left:252.3px;top:624.21px;font-size:17px;font-weight:700;color:#ececec;letter-spacing:0.42px;">GUI time synchronization</div>
<svg style="left:0;top:0" width="1" height="1"><path d="M482.5 627 L490.0 633.0 L482.5 639" stroke="#e0e0e0" stroke-width="1.7" fill="none"/></svg>
<div class="t" style="left:1081.3px;top:624.21px;font-size:17px;font-weight:700;color:#ececec;letter-spacing:0.62px;">Winamp start-of-new-track bug workaround</div>
<svg style="left:0;top:0" width="1" height="1"><path d="M1474.5 627 L1482.0 633.0 L1474.5 639" stroke="#e0e0e0" stroke-width="1.7" fill="none"/></svg>
<div class="a" style="left:245px;top:667px;width:1607px;height:32px;background:#821e82;"></div>
<div class="t" style="left:570.175px;width:1000px;text-align:center;top:675.11px;font-size:17px;font-weight:700;color:#f0e2f0;letter-spacing:0.35px">Outputs</div>
<div class="a" style="left:245px;top:706px;width:1607px;height:90px;background:#262626;"></div>
<div class="t" style="left:252.3px;top:717.01px;font-size:17px;font-weight:700;color:#ececec;letter-spacing:0.7px;">FM Output</div>
<svg style="left:0;top:0" width="1" height="1"><path d="M359 720 L366.5 726.0 L359 732" stroke="#e0e0e0" stroke-width="1.7" fill="none"/></svg>
<div class="a" style="left:252px;top:753px;width:30px;height:30px;border:1px solid #444"></div>
<svg style="left:0;top:0" width="1" height="1"><path d="M261.6 762.3 A8.3 8.3 0 1 0 272.8 762.3" stroke="#dddddd" stroke-width="2.3" fill="none"/><path d="M267.2 759.2 L267.2 768.8" stroke="#dddddd" stroke-width="2.3" stroke-linecap="round"/></svg>
<div class="a" style="left:289px;top:753px;width:1600px;height:30px;border:1px solid #444"></div>
<div class="t" style="left:293.1px;top:760.30px;font-size:15px;font-weight:400;color:#ececec;letter-spacing:0px;">FM output</div>
<div class="t" style="left:374.3px;top:760.30px;font-size:15px;font-weight:400;color:#575757;letter-spacing:-0.03px;">Microsoft Sound Mapper (MME)</div>
<div class="a" style="left:252px;top:790px;width:1700px;height:30px;border:1px solid #444"></div>
<div class="a" style="left:253px;top:791px;width:1470px;height:5px;background:#555555;"></div>
</body></html>
